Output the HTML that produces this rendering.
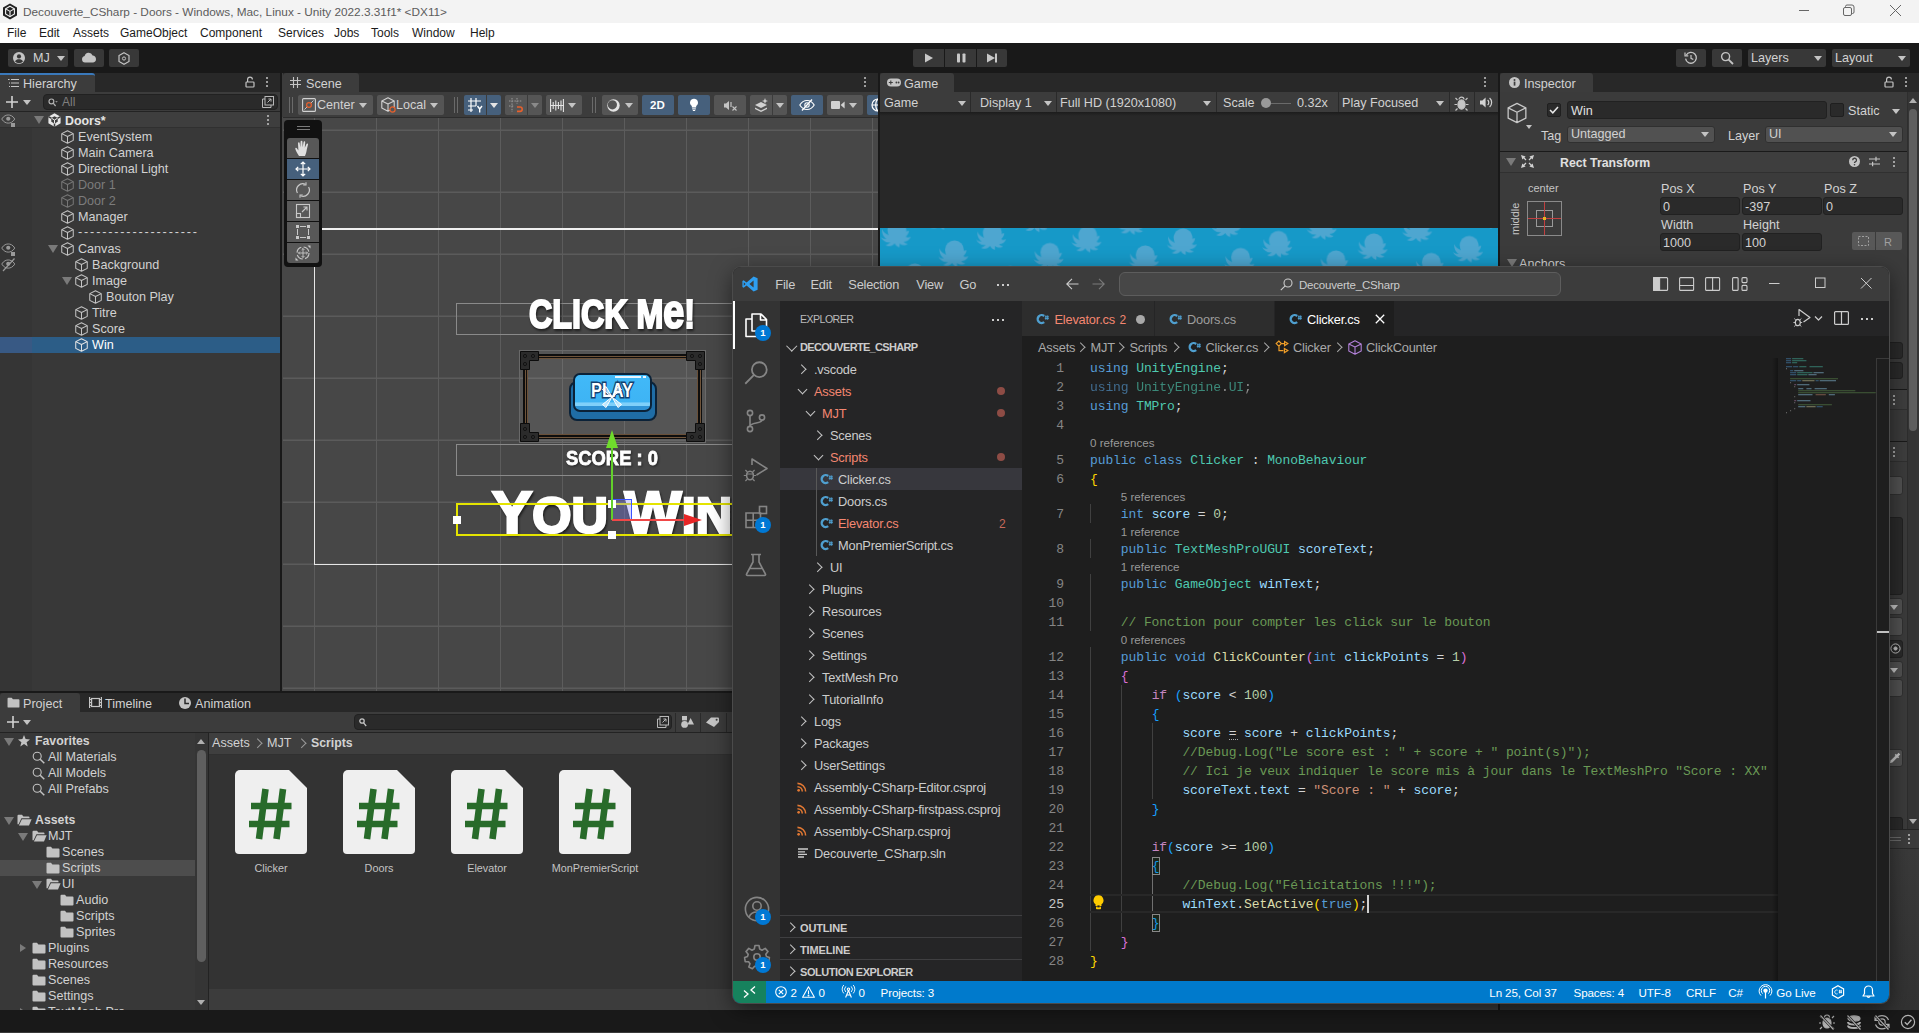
<!DOCTYPE html>
<html lang="en"><head><meta charset="utf-8"><title>Decouverte_CSharp - Unity</title>
<style>
*{box-sizing:border-box;margin:0;padding:0}
html,body{width:1919px;height:1033px;overflow:hidden;background:#191919}
body{position:relative;font-family:"Liberation Sans",sans-serif;font-size:12.6px;color:#d2d2d2;line-height:1}
.a{position:absolute}
.t{position:absolute;white-space:pre;line-height:16px;height:16px}
.u{font-size:12.6px;color:#d2d2d2}
.pan{position:absolute;background:#383838;overflow:hidden}
.tabbar{position:absolute;left:0;top:0;right:0;height:19px;background:#282828}
.tab{position:absolute;top:0;height:19px;background:#3c3c3c;border-radius:3px 3px 0 0}
.btn{position:absolute;background:#383838;border-radius:2px}
.sbtn{position:absolute;top:22px;height:20px;background:#555;border-radius:2px}
.sbtn.on{background:#46607c}
.fld{position:absolute;background:#2a2a2a;border:1px solid #212121;border-radius:3px;height:18px}
.dd{position:absolute;background:#515151;border:1px solid #303030;border-radius:3px;height:18px}
.tri{position:absolute;width:0;height:0;border-left:4.5px solid transparent;border-right:4.5px solid transparent;border-top:5px solid #c4c4c4}
.trir{position:absolute;width:0;height:0;border-top:4.5px solid transparent;border-bottom:4.5px solid transparent;border-left:6px solid #7a7a7a}
.fold{position:absolute;width:0;height:0;border-left:5px solid transparent;border-right:5px solid transparent;border-top:8px solid #7a7a7a}
svg{position:absolute;overflow:visible}
.kebab{position:absolute;width:2px;height:2px;background:#c4c4c4;border-radius:1px;box-shadow:0 4px 0 #c4c4c4,0 8px 0 #c4c4c4}
/* vscode */
.vs{position:absolute;left:733px;top:267px;width:1156px;height:736px;background:#1f1f1f;border-radius:8px;overflow:hidden;box-shadow:0 0 0 1px #4b4b4b,0 6px 22px rgba(0,0,0,.55);font-size:12.7px;color:#ccc}
.vt{position:absolute;white-space:pre;line-height:22px;height:22px;font-size:12.8px;letter-spacing:-.2px;color:#ccc;margin-top:1px}
.code{position:absolute;left:357px;white-space:pre;font-family:"Liberation Mono",monospace;font-size:13px;letter-spacing:-0.1px;line-height:19px;height:19px;color:#d4d4d4;margin-top:1px}
.ln{position:absolute;left:289px;width:42px;text-align:right;font-family:"Liberation Mono",monospace;font-size:13px;letter-spacing:-0.1px;line-height:19px;height:19px;color:#858585;margin-top:1px}
.cl{position:absolute;white-space:pre;font-size:11.6px;line-height:16px;height:16px;color:#999;margin-top:1px}
.k{color:#569cd6}.c{color:#c586c0}.ty{color:#4ec9b0}.v{color:#9cdcfe}.f{color:#dcdcaa}.n{color:#b5cea8}.s{color:#ce9178}.cm{color:#6a9955}
.b1{color:#ffd700}.b2{color:#da70d6}.b3{color:#179fff}
.ig{position:absolute;width:1px;background:#404040}
.chev{position:absolute;width:6.5px;height:6.5px;border-right:1.2px solid #c5c5c5;border-bottom:1.2px solid #c5c5c5}
.chev.r{transform:rotate(-45deg)}.chev.d{transform:rotate(45deg)}
.badge{position:absolute;width:16px;height:16px;border-radius:8px;background:#0078d4;color:#fff;font-size:9.5px;font-weight:bold;line-height:16px;text-align:center}
</style></head><body>
<svg width="0" height="0" style="position:absolute"><defs>
<symbol id="cube" viewBox="0 0 14 15"><path d="M7 .8 L13.2 3.9 V11.1 L7 14.2 L.8 11.1 V3.9 Z M.8 3.9 L7 7 L13.2 3.9 M7 7 V14.2" fill="none" stroke="currentColor" stroke-width="1.1" stroke-linejoin="round"/></symbol>
<symbol id="fclosed" viewBox="0 0 14 12"><path d="M.5 1.8 a1 1 0 0 1 1 -1 H5 L6.4 2.4 H12.5 a1 1 0 0 1 1 1 V10.5 a1 1 0 0 1 -1 1 H1.5 a1 1 0 0 1 -1 -1 Z" fill="#c2c2c2"/></symbol>
<symbol id="fopen" viewBox="0 0 15 12"><path d="M.5 1.8 a1 1 0 0 1 1 -1 H5 L6.4 2.4 H11.5 a1 1 0 0 1 1 1 V4.2 H4.4 L1.6 10.2 H.5 Z" fill="#c2c2c2"/><path d="M4.9 5.2 H14.6 L12 11.5 H1.9 Z" fill="#c2c2c2"/></symbol>
<symbol id="mag" viewBox="0 0 13 13"><circle cx="5.2" cy="5.2" r="4" fill="none" stroke="#c2c2c2" stroke-width="1.1"/><path d="M8.2 8.2 L12.3 12.3" stroke="#c2c2c2" stroke-width="1.5"/></symbol>
<symbol id="cs" viewBox="0 0 13 12"><path d="M8.2 3 A4 4 0 1 0 8.2 9.2" fill="none" stroke="#4f9fcf" stroke-width="2.3"/><path d="M9.9 2.4 V6.8 M11.7 2.4 V6.8 M8.8 3.8 H12.8 M8.8 5.4 H12.8" stroke="#4f9fcf" stroke-width="1"/></symbol>
<symbol id="rss" viewBox="0 0 11 11"><circle cx="1.8" cy="9.2" r="1.5" fill="#e37933"/><path d="M.5 5.2 A5.3 5.3 0 0 1 5.8 10.5 M.5 1.5 A9 9 0 0 1 9.5 10.5" fill="none" stroke="#e37933" stroke-width="1.7"/></symbol>
<symbol id="script" viewBox="0 0 72 84"><path d="M5 0 H54 L72 18 V80 a4 4 0 0 1 -4 4 H4 a4 4 0 0 1 -4 -4 V5 a5 5 0 0 1 5 -5 Z" fill="#efefef"/><path d="M30.5 19 L24 69 M48 19 L41.5 69 M16 36 H56.5 M14 54 H54.5" stroke="#286b2a" stroke-width="6.6" fill="none"/></symbol>
<symbol id="eye" viewBox="0 0 16 12"><path d="M.8 5.5 C3 1.8 6 1 8 1 S13 1.8 15.2 5.5 C13 9 10.3 10 8 10 S3 9 .8 5.5Z" fill="none" stroke="#9a9a9a" stroke-width="1.1"/><circle cx="8" cy="5.2" r="2.3" fill="#9a9a9a"/></symbol>
</defs></svg>
<!-- ===== Unity window chrome ===== -->
<div class="a" style="left:0;top:0;width:1919px;height:23px;background:#f3f3f3"></div>
<svg style="left:2px;top:3px" width="16" height="17" viewBox="0 0 16 17"><path d="M8 0.5 L15 4.5 V12.5 L8 16.5 L1 12.5 V4.5 Z" fill="#222"/><path d="M8 3.2 L12.4 5.8 V10.9 L8 13.6 L3.6 10.9 V5.8 Z" fill="none" stroke="#f3f3f3" stroke-width="1.1"/><path d="M8 8.4 V13.4 M8 8.4 L3.8 5.9 M8 8.4 L12.2 5.9" stroke="#f3f3f3" stroke-width="1.1"/></svg>
<div class="t" style="left:23px;top:4px;font-size:11.8px;color:#5c5c5c;line-height:17px">Decouverte_CSharp - Doors - Windows, Mac, Linux - Unity 2022.3.31f1* &lt;DX11&gt;</div>
<svg style="left:1798px;top:4px" width="106" height="14" viewBox="0 0 106 14" fill="none" stroke="#666" stroke-width="1"><path d="M1 6.5 H11"/><rect x="45.5" y="3.5" width="8" height="8" rx="1.5"/><path d="M47.5 3.5 V2.5 a1.5 1.5 0 0 1 1.5 -1.5 H54 a2 2 0 0 1 2 2 V8 a1.5 1.5 0 0 1 -1.5 1.5 H53.5"/><path d="M92 1 L103 12 M103 1 L92 12"/></svg>
<div class="a" style="left:0;top:23px;width:1919px;height:20px;background:#fff"></div>
<div class="t" style="left:7px;top:25px;font-size:12px;color:#1b1b1b">File</div>
<div class="t" style="left:39px;top:25px;font-size:12px;color:#1b1b1b">Edit</div>
<div class="t" style="left:73px;top:25px;font-size:12px;color:#1b1b1b">Assets</div>
<div class="t" style="left:120px;top:25px;font-size:12px;color:#1b1b1b">GameObject</div>
<div class="t" style="left:200px;top:25px;font-size:12px;color:#1b1b1b">Component</div>
<div class="t" style="left:278px;top:25px;font-size:12px;color:#1b1b1b">Services</div>
<div class="t" style="left:334px;top:25px;font-size:12px;color:#1b1b1b">Jobs</div>
<div class="t" style="left:371px;top:25px;font-size:12px;color:#1b1b1b">Tools</div>
<div class="t" style="left:412px;top:25px;font-size:12px;color:#1b1b1b">Window</div>
<div class="t" style="left:470px;top:25px;font-size:12px;color:#1b1b1b">Help</div>
<!-- main toolbar -->
<div class="a" style="left:0;top:43px;width:1919px;height:30px;background:#191919"></div>
<div class="btn" style="left:8px;top:49px;width:60px;height:18px"></div>
<svg style="left:13px;top:52px" width="12" height="12" viewBox="0 0 12 12"><circle cx="6" cy="6" r="6" fill="#c4c4c4"/><circle cx="6" cy="4.4" r="2.1" fill="#383838"/><path d="M2 9.6 C2.6 7.6 4.4 7.2 6 7.2 S9.4 7.6 10 9.6 A5.6 5.6 0 0 1 2 9.6Z" fill="#383838"/></svg>
<div class="t u" style="left:33px;top:50px">MJ</div>
<div class="tri" style="left:57px;top:56px"></div>
<div class="btn" style="left:74px;top:49px;width:30px;height:18px"></div>
<svg style="left:81px;top:52px" width="16" height="11" viewBox="0 0 16 11"><path d="M4 10.5 a3.3 3.3 0 0 1 -.4 -6.5 a4.2 4.2 0 0 1 8 -.6 a3.6 3.6 0 0 1 .6 7.1 Z" fill="#c4c4c4"/></svg>
<div class="btn" style="left:109px;top:49px;width:30px;height:18px"></div>
<svg style="left:118px;top:52px" width="12" height="13" viewBox="0 0 12 13" fill="none" stroke="#c4c4c4" stroke-width="1.2"><path d="M6 .8 L11 3.6 V9.4 L6 12.2 L1 9.4 V3.6 Z"/><circle cx="6" cy="6.5" r="1.6" stroke-width="1"/></svg>
<div class="btn" style="left:913px;top:49px;width:31px;height:18px;border-radius:2px 0 0 2px"></div>
<div class="btn" style="left:945px;top:49px;width:31px;height:18px;border-radius:0"></div>
<div class="btn" style="left:977px;top:49px;width:30px;height:18px;border-radius:0 2px 2px 0"></div>
<svg style="left:913px;top:49px" width="94" height="18" viewBox="0 0 94 18" fill="#c8c8c8"><path d="M12 4.5 L20 9 L12 13.5Z"/><rect x="44" y="4.5" width="3" height="9" rx=".8"/><rect x="49.5" y="4.5" width="3" height="9" rx=".8"/><path d="M74 4.5 L82 9 L74 13.5Z"/><rect x="82" y="4.5" width="2" height="9"/></svg>
<div class="btn" style="left:1676px;top:49px;width:30px;height:18px"></div>
<svg style="left:1684px;top:51px" width="14" height="14" viewBox="0 0 14 14" fill="none" stroke="#c4c4c4" stroke-width="1.3"><path d="M2.2 4.2 A5.4 5.4 0 1 1 1.6 7.6"/><path d="M1 1.5 V4.8 H4.3" stroke-width="1.2"/><path d="M7 4 V7.3 L9.3 8.6" stroke-width="1.2"/></svg>
<div class="btn" style="left:1712px;top:49px;width:30px;height:18px"></div>
<svg style="left:1720px;top:51px" width="14" height="14" viewBox="0 0 14 14" fill="none" stroke="#c4c4c4" stroke-width="1.4"><circle cx="5.6" cy="5.6" r="4"/><path d="M8.6 8.6 L13 13" stroke-width="1.8"/></svg>
<div class="btn" style="left:1748px;top:49px;width:78px;height:18px"></div>
<div class="t u" style="left:1751px;top:50px">Layers</div><div class="tri" style="left:1814px;top:56px"></div>
<div class="btn" style="left:1832px;top:49px;width:78px;height:18px"></div>
<div class="t u" style="left:1835px;top:50px">Layout</div><div class="tri" style="left:1898px;top:56px"></div>
<!-- status bar -->
<div class="a" style="left:0;top:1010px;width:1919px;height:23px;background:#191919;border-bottom:1px solid #3a3a3a"></div>
<svg style="left:1818px;top:1013px" width="98" height="18" viewBox="0 0 98 18" fill="none" stroke="#b4b4b4" stroke-width="1.2"><g><ellipse cx="9" cy="10" rx="4" ry="5" fill="#b4b4b4"/><path d="M4 5 L2 3 M14 5 L16 3 M3 10 H1 M15 10 H17 M4 14 L2 16 M14 14 L16 16 M6.5 4.5 a2.5 2.5 0 0 1 5 0"/><path d="M2 2 L16 17" stroke="#191919" stroke-width="2.5"/><path d="M2.5 2.5 L15.5 16.5"/></g><g transform="translate(27,0)"><ellipse cx="9" cy="5.5" rx="6" ry="2.6" fill="#b4b4b4"/><path d="M3 9 a6 2.6 0 0 0 12 0 M3 12.5 a6 2.6 0 0 0 12 0" stroke-width="2"/><path d="M2 2 L16 17" stroke="#191919" stroke-width="2.5"/><path d="M2.5 2.5 L15.5 16.5"/></g><g transform="translate(55,0)"><circle cx="9" cy="9" r="3.2"/><path d="M2.5 7 a7 7 0 0 1 13 0 M15.5 11.5 a7 7 0 0 1 -13 0 M2 3.5 V7.3 H5.5 M16 15 V11.3 H12.5"/><path d="M2 2 L16 17" stroke="#191919" stroke-width="2.5"/><path d="M2.5 2.5 L15.5 16.5"/></g><g transform="translate(81,0)"><circle cx="9" cy="9" r="6.6"/><path d="M5.8 9.2 L8.2 11.6 L12.4 6.8" stroke-width="1.4"/></g></svg>
<!-- ===== Hierarchy ===== -->
<div class="pan" style="left:0;top:73px;width:280px;height:618px">
 <div class="tabbar"></div>
 <div class="tab" style="left:0;width:95px;border-top:2px solid #3a79bb;border-radius:0 3px 0 0"></div>
 <svg style="left:8px;top:5px" width="11" height="10" viewBox="0 0 11 10" stroke="#c4c4c4" stroke-width="1.2"><path d="M3 1.5 H11 M3 5 H11 M3 8.5 H11 M0 1.5 H1.6 M1 5 H2 M1 8.5 H2"/></svg>
 <div class="t u" style="left:23px;top:3px">Hierarchy</div>
 <svg style="left:245px;top:3px" width="10" height="12" viewBox="0 0 10 12" fill="none" stroke="#c4c4c4" stroke-width="1.2"><rect x="1" y="6" width="8" height="5" rx=".8"/><path d="M2.6 6 V3.6 a2.4 2.4 0 0 1 4.8 0"/></svg>
 <div class="kebab" style="left:266px;top:4px"></div>
 <div class="a" style="left:0;top:19px;width:280px;height:20px;background:#3c3c3c;border-bottom:1px solid #232323"></div>
 <svg style="left:6px;top:23px" width="12" height="12" viewBox="0 0 12 12" stroke="#d2d2d2" stroke-width="1.6"><path d="M6 0 V12 M0 6 H12"/></svg>
 <div class="tri" style="left:23px;top:27px;border-left-width:4px;border-right-width:4px"></div>
 <div class="fld" style="left:43px;top:21px;width:235px;height:16px;border-radius:4px"></div>
 <svg style="left:48px;top:25px" width="10" height="9" viewBox="0 0 10 9" fill="none" stroke="#b0b0b0" stroke-width="1.2"><circle cx="3.4" cy="3.4" r="2.4"/><path d="M5.2 5.2 L7.6 8"/><path d="M7.2 3.2 H9.8 L8.5 4.6Z" fill="#b0b0b0" stroke="none"/></svg>
 <div class="t" style="left:62px;top:21px;font-size:12px;color:#7f7f7f">All</div>
 <svg style="left:262px;top:23px" width="12" height="12" viewBox="0 0 12 12" fill="none" stroke="#b8b8b8" stroke-width="1"><path d="M3 3 H.5 V11.5 H9 V9"/><rect x="3" y=".5" width="8.5" height="8.5"/><path d="M5.5 6.5 L9 3 M6.4 3 H9 V5.6"/></svg>
 <!-- vis column -->
 <div class="a" style="left:0;top:39px;width:32px;height:579px;background:#353535"></div>
 <!-- scene row -->
 <div class="a" style="left:0;top:39px;width:280px;height:16px;background:#3e3e3e;border-bottom:1px solid #303030"></div>
 <svg style="left:1px;top:41px;color:#9a9a9a" width="14.5" height="11"><use href="#eye"/></svg><div class="a" style="left:11px;top:50px;width:4px;height:4px;background:#9a9a9a"></div>
 <div class="fold" style="left:34px;top:43px"></div>
 <svg style="left:48px;top:40px" width="13" height="14" viewBox="0 0 13 14"><path d="M6.5 .3 L12.6 3.8 V10.2 L6.5 13.7 L.4 10.2 V3.8 Z" fill="#e8e8e8"/><path d="M6.5 7 V13.7 M6.5 7 L.4 3.6 M6.5 7 L12.6 3.6" stroke="#3e3e3e" stroke-width="1.5"/><path d="M6.5 3.3 L9.7 5.1 V8.8 L6.5 10.6 L3.3 8.8 V5.1 Z" fill="#3e3e3e"/><path d="M6.5 7 V10.6 M6.5 7 L3.3 5.1 M6.5 7 L9.7 5.1" stroke="#e8e8e8" stroke-width="1"/></svg>
 <div class="t" style="left:65px;top:40px;font-weight:bold;font-size:12.4px;color:#e4e4e4">Doors*</div>
 <div class="kebab" style="left:267px;top:42px"></div>
 <!-- selected row -->
 <div class="a" style="left:0;top:264px;width:280px;height:16px;background:#2c5d87"></div>
 <div class="a" style="left:0;top:264px;width:32px;height:16px;background:#385984"></div>
 <!-- rows -->
 <svg style="left:61px;top:57px;color:#c4c4c4" width="13" height="14"><use href="#cube"/></svg><div class="t u" style="left:78px;top:56px">EventSystem</div>
 <svg style="left:61px;top:73px;color:#c4c4c4" width="13" height="14"><use href="#cube"/></svg><div class="t u" style="left:78px;top:72px">Main Camera</div>
 <svg style="left:61px;top:89px;color:#c4c4c4" width="13" height="14"><use href="#cube"/></svg><div class="t u" style="left:78px;top:88px">Directional Light</div>
 <svg style="left:61px;top:105px;color:#777" width="13" height="14"><use href="#cube"/></svg><div class="t u" style="left:78px;top:104px;color:#7c7c7c">Door 1</div>
 <svg style="left:61px;top:121px;color:#777" width="13" height="14"><use href="#cube"/></svg><div class="t u" style="left:78px;top:120px;color:#7c7c7c">Door 2</div>
 <svg style="left:61px;top:137px;color:#c4c4c4" width="13" height="14"><use href="#cube"/></svg><div class="t u" style="left:78px;top:136px">Manager</div>
 <svg style="left:61px;top:153px;color:#c4c4c4" width="13" height="14"><use href="#cube"/></svg><div class="t u" style="left:78px;top:151px;letter-spacing:1.85px">--------------------</div>
 <svg style="left:1px;top:170px" width="14.5" height="11"><use href="#eye"/></svg><div class="a" style="left:11px;top:179px;width:4px;height:4px;background:#9a9a9a"></div>
 <div class="fold" style="left:48px;top:172px"></div>
 <svg style="left:61px;top:169px;color:#c4c4c4" width="13" height="14"><use href="#cube"/></svg><div class="t u" style="left:78px;top:168px">Canvas</div>
 <svg style="left:1px;top:186px" width="14.5" height="11"><use href="#eye"/></svg><svg style="left:1px;top:184px" width="16" height="16" viewBox="0 0 16 16"><path d="M2 14 L13.5 1.5" stroke="#9a9a9a" stroke-width="1.2"/></svg>
 <svg style="left:75px;top:185px;color:#c4c4c4" width="13" height="14"><use href="#cube"/></svg><div class="t u" style="left:92px;top:184px">Background</div>
 <div class="fold" style="left:62px;top:204px"></div>
 <svg style="left:75px;top:201px;color:#c4c4c4" width="13" height="14"><use href="#cube"/></svg><div class="t u" style="left:92px;top:200px">Image</div>
 <svg style="left:89px;top:217px;color:#c4c4c4" width="13" height="14"><use href="#cube"/></svg><div class="t u" style="left:106px;top:216px">Bouton Play</div>
 <svg style="left:75px;top:233px;color:#c4c4c4" width="13" height="14"><use href="#cube"/></svg><div class="t u" style="left:92px;top:232px">Titre</div>
 <svg style="left:75px;top:249px;color:#c4c4c4" width="13" height="14"><use href="#cube"/></svg><div class="t u" style="left:92px;top:248px">Score</div>
 <svg style="left:75px;top:265px;color:#e4e4e4" width="13" height="14"><use href="#cube"/></svg><div class="t u" style="left:92px;top:264px;color:#fff">Win</div>
</div>
<!-- ===== Scene ===== -->
<div class="a" style="left:282px;top:73px;width:2px;height:618px;background:linear-gradient(#3c3c3c 0,#3c3c3c 44px,#474747 44px)"></div>
<div class="pan" style="left:283px;top:73px;width:595px;height:618px;background:#474747">
 <div class="tabbar"></div>
 <div class="tab" style="left:0;width:76px"></div>
 <svg style="left:7px;top:4px" width="11" height="11" viewBox="0 0 11 11" stroke="#c4c4c4" stroke-width="1.1"><path d="M3.5 0 V11 M7.5 0 V11 M0 3.5 H11 M0 7.5 H11"/></svg>
 <div class="t u" style="left:23px;top:3px">Scene</div>
 <div class="kebab" style="left:581px;top:4px"></div>
 <div class="a" style="left:0;top:19px;width:595px;height:26px;background:#3c3c3c;border-bottom:1px solid #2c2c2c"></div>
 <!-- grid -->
 <div class="a" style="left:0;top:45px;width:595px;height:573px;background:
  repeating-linear-gradient(90deg,transparent 0,transparent 61px,#5c5c5c 61px,#5c5c5c 62px) 32px 0/62px 100%,
  linear-gradient(180deg,#515151 0,#515151 1px,#5b5b5b 1px,#5b5b5b 2px,transparent 2px) 0 0/100% 62px;background-position:32px 0,0 11px"></div>
 <!-- canvas outline -->
 <div class="a" style="left:38px;top:155px;width:557px;height:2px;background:#f0f0f0"></div>
 <div class="a" style="left:31px;top:156px;width:1px;height:336px;background:#e6e6e6"></div>
 <div class="a" style="left:31px;top:491px;width:564px;height:1px;background:#e6e6e6"></div>
 <!-- rect outlines -->
 <div class="a" style="left:173px;top:230px;width:440px;height:32px;border:1px solid #8a8a8a"></div>
 <div class="a" style="left:173px;top:371px;width:440px;height:32px;border:1px solid #8a8a8a"></div>
 <!-- frame -->
 <div class="a" style="left:236px;top:277px;width:187px;height:93px;background:rgba(255,255,255,.08);border:1px solid #696969"></div>
 <div class="a" style="left:240px;top:281px;width:179px;height:85px;border:4px solid #0e0e0e;box-shadow:inset 0 0 0 1px #6a5038"></div>
 <div class="a" style="left:241.5px;top:282.5px;width:176px;height:82px;border:1px solid #6f543a"></div>
 <svg style="left:237px;top:278px" width="185" height="91" viewBox="0 0 185 91"><g fill="#2b2b2b" stroke="#0c0c0c" stroke-width="1"><path d="M.5 .5 H18.5 V9.5 H9.5 V18.5 H.5Z"/><path d="M184.5 .5 H166.5 V9.5 H175.5 V18.5 H184.5Z"/><path d="M.5 90.5 H18.5 V81.5 H9.5 V72.5 H.5Z"/><path d="M184.5 90.5 H166.5 V81.5 H175.5 V72.5 H184.5Z"/></g><g fill="none" stroke="#0c0c0c" stroke-width=".8"><circle cx="5" cy="5" r="1.6"/><circle cx="13" cy="5" r="1.6"/><circle cx="5" cy="13" r="1.6"/><circle cx="180" cy="5" r="1.6"/><circle cx="172" cy="5" r="1.6"/><circle cx="180" cy="13" r="1.6"/><circle cx="5" cy="86" r="1.6"/><circle cx="13" cy="86" r="1.6"/><circle cx="5" cy="78" r="1.6"/><circle cx="180" cy="86" r="1.6"/><circle cx="172" cy="86" r="1.6"/><circle cx="180" cy="78" r="1.6"/></g></svg>
 <!-- play button -->
 <div class="a" style="left:286px;top:308px;width:88px;height:40px;background:#1f6da6;border:2px solid #0b2238;border-radius:8px"></div>
 <div class="a" style="left:290px;top:300px;width:79px;height:39px;background:linear-gradient(#41b9f8 0,#3eb4f4 78%,#7fd0fa 79%,#7fd0fa 88%,#2f93d6 89%);border:2px solid #0b2238;border-radius:7px"></div>
 <div class="a" style="left:332px;top:303px;width:26px;height:2px;background:#e8f6ff"></div><div class="a" style="left:360px;top:303px;width:3px;height:2px;background:#e8f6ff"></div>
 <svg style="left:300px;top:304px" width="60" height="26"><text x="29" y="20" text-anchor="middle" font-family="Liberation Sans,sans-serif" font-weight="bold" font-size="20" fill="#fff" stroke="#14416e" stroke-width="3" paint-order="stroke" textLength="42" lengthAdjust="spacingAndGlyphs">PLAY</text></svg>
 <svg style="left:317px;top:312px" width="24" height="24" viewBox="0 0 24 24" fill="rgba(255,255,255,.5)" stroke="#fff" stroke-width="1"><path d="M12 12 L2.5 4.5 L6 1.5Z M12 12 L21.5 4.5 L18 1.5Z M12 12 L2.5 19.5 L6 22.5Z M12 12 L21.5 19.5 L18 22.5Z"/></svg>
 <!-- texts -->
 <svg style="left:240px;top:220px" width="180" height="44"><text x="6" y="35" font-family="Liberation Sans,sans-serif" font-weight="bold" font-size="41" fill="#fff" stroke="#fff" stroke-width="2.2" textLength="166" lengthAdjust="spacingAndGlyphs" style="filter:drop-shadow(1px 2px 1px rgba(0,0,0,.55))">CLICK M<tspan font-size="48">e</tspan>!</text></svg>
 <svg style="left:280px;top:372px" width="100" height="24"><text x="3" y="19.5" font-family="Liberation Sans,sans-serif" font-weight="bold" font-size="21" fill="#fff" stroke="#fff" stroke-width=".8" textLength="92" lengthAdjust="spacingAndGlyphs" style="filter:drop-shadow(1px 1px 1px rgba(0,0,0,.5))">SCORE : 0</text></svg>
 <svg style="left:200px;top:405px" width="395" height="64"><text x="9" y="55" font-family="Liberation Sans,sans-serif" font-weight="bold" font-size="60" fill="#fff" stroke="#fff" stroke-width="2.6" textLength="240" lengthAdjust="spacingAndGlyphs" style="filter:drop-shadow(1px 2px 1px rgba(0,0,0,.6))">Y<tspan font-size="50">OU</tspan> W<tspan font-size="50">IN</tspan></text></svg>
 <!-- selection -->
 <div class="a" style="left:173px;top:430px;width:440px;height:33px;border:2px solid #e4e400"></div>
 <div class="a" style="left:329px;top:426px;width:20px;height:21px;background:rgba(130,130,255,.33);border:1px solid #3a55ff"></div>
 <div class="a" style="left:170px;top:443px;width:8px;height:8px;background:#fff"></div>
 <div class="a" style="left:325px;top:427px;width:8px;height:8px;background:#fff"></div>
 <div class="a" style="left:325px;top:458px;width:8px;height:8px;background:#fff"></div>
 <div class="a" style="left:328px;top:372px;width:2px;height:75px;background:#62d02a"></div>
 <svg style="left:322px;top:357px" width="14" height="18" viewBox="0 0 14 18"><path d="M7 0 L13 18 H1Z" fill="#6fdc2c"/></svg>
 <div class="a" style="left:329px;top:446px;width:74px;height:1.5px;background:#f04848"></div>
 <svg style="left:401px;top:441px" width="18" height="12" viewBox="0 0 18 12"><path d="M18 6 L0 0 V12Z" fill="#e82626"/></svg>
 <!-- toolbar buttons -->
 <div class="a" style="left:6px;top:24px;width:1px;height:16px;background:#6a6a6a"></div><div class="a" style="left:9px;top:24px;width:1px;height:16px;background:#6a6a6a"></div>
 <div class="sbtn" style="left:15px;width:75px"></div>
 <svg style="left:19px;top:25px" width="14" height="14" viewBox="0 0 14 14" fill="none"><rect x=".6" y=".6" width="12.8" height="12.8" rx="1" stroke="#d2d2d2" stroke-width="1.1"/><path d="M2.5 11.5 L11.5 2.5" stroke="#d2d2d2" stroke-width=".9"/><circle cx="7" cy="7" r="2.4" fill="#555" stroke="#e8602c" stroke-width="1.2"/></svg>
 <div class="t u" style="left:34px;top:24px">Center</div><div class="tri" style="left:76px;top:30px"></div>
 <div class="sbtn" style="left:94px;width:67px"></div>
 <svg style="left:98px;top:24px;color:#d2d2d2" width="14" height="15"><use href="#cube"/></svg><svg style="left:106px;top:33px" width="7" height="7"><circle cx="3.5" cy="3.5" r="2.6" fill="#555" stroke="#e8602c" stroke-width="1.2"/></svg>
 <div class="t u" style="left:113px;top:24px">Local</div><div class="tri" style="left:147px;top:30px"></div>
 <div class="a" style="left:171px;top:24px;width:1px;height:16px;background:#6a6a6a"></div><div class="a" style="left:174px;top:24px;width:1px;height:16px;background:#6a6a6a"></div>
 <div class="sbtn on" style="left:181px;width:22px;border-radius:2px 0 0 2px"></div><div class="sbtn on" style="left:204px;width:14px;border-radius:0 2px 2px 0"></div>
 <svg style="left:185px;top:25px" width="15" height="15" viewBox="0 0 15 15" stroke="#fff" stroke-width="1.2" fill="none"><path d="M3 0 V14 M8 0 V8 M0 3 H13 M0 8 H8 M0 12 H5"/><path d="M9.5 8 L11.7 11 L14 8 M11.7 11 V14.5" stroke-width="1.4"/></svg>
 <div class="tri" style="left:206.5px;top:30px;border-top-color:#e4e4e4"></div>
 <div class="sbtn" style="left:222px;width:22px;border-radius:2px 0 0 2px"></div><div class="sbtn" style="left:245px;width:14px;border-radius:0 2px 2px 0"></div>
 <svg style="left:226px;top:25px" width="15" height="15" viewBox="0 0 15 15" stroke="#9a9a9a" stroke-width="1" fill="none" stroke-dasharray="1.5 1.2"><path d="M3 0 V14 M8 0 V6 M0 3 H13 M0 8 H5"/><path d="M8 9 H11 a2.2 2.2 0 0 1 0 4.4 H8" stroke="#e8602c" stroke-width="1.6" stroke-dasharray="none"/></svg>
 <div class="tri" style="left:247.5px;top:30px;border-top-color:#8a8a8a"></div>
 <div class="sbtn" style="left:263px;width:36px"></div>
 <svg style="left:267px;top:26px" width="14" height="13" viewBox="0 0 14 13" stroke="#e4e4e4" stroke-width="1.1"><path d="M.6 0 V13 M3.2 3 V10 M5.8 1.5 V11.5 M8.4 3 V10 M11 1.5 V11.5 M13.4 0 V13 M0 6.5 H14"/></svg>
 <div class="tri" style="left:285px;top:30px"></div>
 <div class="a" style="left:309px;top:24px;width:1px;height:16px;background:#6a6a6a"></div><div class="a" style="left:312px;top:24px;width:1px;height:16px;background:#6a6a6a"></div>
 <div class="sbtn" style="left:319px;width:36px"></div>
 <svg style="left:323px;top:25px" width="15" height="15" viewBox="0 0 15 15"><circle cx="7.5" cy="7.5" r="6.2" fill="#e4e4e4"/><circle cx="6.4" cy="6.8" r="4.6" fill="#555"/></svg>
 <div class="tri" style="left:342px;top:30px"></div>
 <div class="sbtn on" style="left:359px;width:32px"></div><div class="t" style="left:367px;top:24px;font-weight:bold;font-size:11.5px;color:#fff">2D</div>
 <div class="sbtn on" style="left:395px;width:32px"></div>
 <svg style="left:406px;top:25px" width="10" height="14" viewBox="0 0 12 16" fill="#fff"><path d="M6 .5 a4.8 4.8 0 0 1 2.6 8.8 V11 H3.4 V9.3 A4.8 4.8 0 0 1 6 .5Z"/><rect x="3.8" y="12" width="4.4" height="1.3"/><rect x="4.6" y="14" width="2.8" height="1.2"/></svg>
 <div class="sbtn" style="left:431px;width:32px"></div>
 <svg style="left:440px;top:26px" width="15" height="13" viewBox="0 0 15 13" fill="#c4c4c4" stroke="#c4c4c4"><path d="M1 4.5 H3 L6 2 V11 L3 8.5 H1Z" stroke="none"/><path d="M8 3 V8" stroke-width="1.2"/><path d="M9.5 7.5 L13.5 11.5 M13.5 7.5 L9.5 11.5" stroke-width="1.1"/></svg>
 <div class="sbtn" style="left:467px;width:22px;border-radius:2px 0 0 2px"></div><div class="sbtn" style="left:490px;width:14px;border-radius:0 2px 2px 0"></div>
 <svg style="left:471px;top:25px" width="15" height="14" viewBox="0 0 15 14" fill="#d2d2d2"><path d="M7 4 L13 7 L7 10 L1 7Z"/><path d="M1 9.5 L7 12.5 L13 9.5 L13 11 L7 14 L1 11Z"/><path d="M11 0 L11.8 2.2 L14 3 L11.8 3.8 L11 6 L10.2 3.8 L8 3 L10.2 2.2Z"/></svg>
 <div class="tri" style="left:492.5px;top:30px"></div>
 <div class="sbtn on" style="left:508px;width:32px"></div>
 <svg style="left:516px;top:26px" width="16" height="12" viewBox="0 0 16 12"><path d="M.8 6 C3 2.3 6 1.5 8 1.5 S13 2.3 15.2 6 C13 9.7 10.3 10.5 8 10.5 S3 9.7 .8 6Z" fill="none" stroke="#fff" stroke-width="1.1"/><circle cx="8" cy="6" r="2.2" fill="none" stroke="#fff" stroke-width="1.1"/><path d="M3 11.5 L13 .5" stroke="#fff" stroke-width="1.3"/></svg>
 <div class="sbtn" style="left:544px;width:36px"></div>
 <svg style="left:548px;top:27px" width="14" height="10" viewBox="0 0 14 10" fill="#d2d2d2"><rect x="0" y="1" width="9" height="8" rx="1"/><path d="M9.6 5 L13.6 1.6 V8.4Z"/></svg>
 <div class="tri" style="left:566px;top:30px"></div>
 <div class="sbtn on" style="left:584px;width:32px"></div>
 <svg style="left:587px;top:25px" width="14" height="14" viewBox="0 0 14 14" fill="none" stroke="#fff" stroke-width="1.2"><circle cx="8" cy="7" r="6"/><path d="M2 7 H9 M8 1 C5 3 5 11 8 13"/></svg>
 <!-- tool overlay -->
 <div class="a" style="left:1px;top:47px;width:38px;height:147px;background:#111;border-radius:4px"></div>
 <div class="a" style="left:14px;top:53px;width:13px;height:1px;background:#7a7a7a"></div><div class="a" style="left:14px;top:56px;width:13px;height:1px;background:#7a7a7a"></div>
 <div class="a" style="left:4px;top:65px;width:32px;height:20px;background:#585858;border-radius:3px 3px 0 0"></div>
 <div class="a" style="left:4px;top:86px;width:32px;height:20px;background:#46607c"></div>
 <div class="a" style="left:4px;top:107px;width:32px;height:20px;background:#585858"></div>
 <div class="a" style="left:4px;top:128px;width:32px;height:20px;background:#585858"></div>
 <div class="a" style="left:4px;top:149px;width:32px;height:20px;background:#585858"></div>
 <div class="a" style="left:4px;top:170px;width:32px;height:20px;background:#585858;border-radius:0 0 3px 3px"></div>
 <svg style="left:12px;top:67px" width="16" height="16" viewBox="0 0 16 16" fill="#e0e0e0"><path d="M4 16 C2 13 .5 10.5 .3 8.6 C.2 7.6 1.4 7.4 2 8.4 L3.4 10.6 L3 3.2 C3 2 4.6 2 4.7 3.2 L5.3 7.5 L5.6 1.6 C5.7 .4 7.3 .4 7.4 1.6 L7.6 7.3 L8.6 1.9 C8.8 .8 10.3 1 10.2 2.2 L9.8 7.7 L11.5 4 C12 3 13.3 3.5 13 4.6 L11.8 9.5 C11.5 12 10.8 14 10 16Z"/></svg>
 <svg style="left:12px;top:88px" width="16" height="16" viewBox="0 0 16 16" fill="none" stroke="#fff" stroke-width="1.2"><path d="M8 1 V15 M1 8 H15 M5.8 3.2 L8 1 L10.2 3.2 M5.8 12.8 L8 15 L10.2 12.8 M3.2 5.8 L1 8 L3.2 10.2 M12.8 5.8 L15 8 L12.8 10.2"/></svg>
 <svg style="left:12px;top:109px" width="16" height="16" viewBox="0 0 16 16" fill="none" stroke="#c8c8c8" stroke-width="1.2"><path d="M2.4 11 A6.3 6.3 0 0 1 10.4 2.2 M13.6 5 A6.3 6.3 0 0 1 5.6 13.8"/><path d="M11 .2 V3 H8.2 M5 15.8 V13 H7.8" stroke-width="1.1"/></svg>
 <svg style="left:12px;top:130px" width="16" height="16" viewBox="0 0 16 16" fill="none" stroke="#c8c8c8" stroke-width="1.1"><rect x="1.5" y="1.5" width="13" height="13"/><rect x="1.5" y="10.5" width="4" height="4"/><path d="M7 9 L12 4 M8.4 4 H12 V7.6"/></svg>
 <svg style="left:12px;top:151px" width="16" height="16" viewBox="0 0 16 16" fill="#c8c8c8"><path d="M5 2 H11 V3 H5Z M5 13 H11 V14 H5Z M2 5 H3 V11 H2Z M13 5 H14 V11 H13Z"/><rect x="1" y="1" width="3" height="3"/><rect x="12" y="1" width="3" height="3"/><rect x="1" y="12" width="3" height="3"/><rect x="12" y="12" width="3" height="3"/></svg>
 <svg style="left:12px;top:172px" width="16" height="16" viewBox="0 0 16 16" fill="none" stroke="#c8c8c8" stroke-width="1.1"><circle cx="8" cy="8" r="6" stroke-dasharray="7 2.4"/><path d="M8 3.5 V12.5 M3.5 8 H12.5 M6.6 4.9 L8 3.5 L9.4 4.9 M6.6 11.1 L8 12.5 L9.4 11.1 M4.9 6.6 L3.5 8 L4.9 9.4 M11.1 6.6 L12.5 8 L11.1 9.4" stroke-width=".9"/><path d="M.5 15.5 L.5 12.5 L3.5 15.5Z M15.5 .5 L15.5 3.5 L12.5 .5Z" fill="#c8c8c8" stroke="none"/></svg>
</div>
<!-- ===== Game ===== -->
<div class="pan" style="left:880px;top:73px;width:618px;height:618px;background:#282828">
 <div class="tabbar"></div>
 <div class="tab" style="left:0;width:74px"></div>
 <svg style="left:7px;top:5px" width="14" height="9" viewBox="0 0 14 9"><rect x="0" y=".5" width="14" height="8" rx="4" fill="#c4c4c4"/><path d="M3.8 2.5 V6.5 M1.8 4.5 H5.8" stroke="#3c3c3c" stroke-width="1.1"/><circle cx="9.4" cy="4.5" r=".9" fill="#3c3c3c"/><circle cx="11.6" cy="4.5" r=".9" fill="#3c3c3c"/></svg>
 <div class="t u" style="left:24px;top:3px">Game</div>
 <div class="kebab" style="left:604px;top:4px"></div>
 <div class="a" style="left:0;top:19px;width:618px;height:20px;background:#3c3c3c"></div><div class="a" style="left:0;top:39px;width:618px;height:4px;background:linear-gradient(#1c1c1c,#282828)"></div>
 <div class="t u" style="left:4px;top:22px">Game</div><div class="tri" style="left:78px;top:28px"></div>
 <div class="a" style="left:90px;top:19px;width:1px;height:20px;background:#2a2a2a"></div>
 <div class="t u" style="left:100px;top:22px">Display 1</div><div class="tri" style="left:164px;top:28px"></div>
 <div class="a" style="left:176px;top:19px;width:1px;height:20px;background:#2a2a2a"></div>
 <div class="t u" style="left:180px;top:22px">Full HD (1920x1080)</div><div class="tri" style="left:323px;top:28px"></div>
 <div class="a" style="left:336px;top:19px;width:1px;height:20px;background:#2a2a2a"></div>
 <div class="t u" style="left:343px;top:22px">Scale</div>
 <div class="a" style="left:386px;top:30px;width:25px;height:1px;background:#6a6a6a"></div><div class="a" style="left:381px;top:25px;width:10px;height:10px;border-radius:5px;background:#999"></div>
 <div class="t u" style="left:417px;top:22px">0.32x</div>
 <div class="a" style="left:458px;top:19px;width:1px;height:20px;background:#2a2a2a"></div>
 <div class="t u" style="left:462px;top:22px">Play Focused</div><div class="tri" style="left:556px;top:28px"></div>
 <div class="a" style="left:569px;top:19px;width:1px;height:20px;background:#2a2a2a"></div>
 <svg style="left:574px;top:22px" width="15" height="16" viewBox="0 0 15 16" fill="none" stroke="#c4c4c4" stroke-width="1.2"><ellipse cx="7.5" cy="9.5" rx="3.6" ry="4.6" fill="#c4c4c4"/><path d="M3.5 5 L1.5 3 M11.5 5 L13.5 3 M3 9.5 H.5 M12 9.5 H14.5 M3.5 13.5 L1.5 15.5 M11.5 13.5 L13.5 15.5 M5 4.6 a2.5 2.5 0 0 1 5 0"/></svg>
 <div class="a" style="left:594px;top:19px;width:1px;height:20px;background:#2a2a2a"></div>
 <svg style="left:600px;top:23px" width="14" height="13" viewBox="0 0 14 13" fill="#d2d2d2" stroke="#d2d2d2"><path d="M0 4.5 H2.4 L5.6 1.6 V11.4 L2.4 8.5 H0Z" stroke="none"/><path d="M7.6 4 a3.2 3.2 0 0 1 0 5 M9.6 2 a6 6 0 0 1 0 9" fill="none" stroke-width="1.2"/></svg>
 <!-- game image -->
 <svg style="left:0;top:155px" width="618" height="462" viewBox="0 0 618 462"><defs><g id="oct"><circle cx="0" cy="-3" r="9.4"/><path d="M-8 2 C-11 1 -14 -1 -15 -4 C-15 1 -13 4 -10 6 C-13 6 -15 5 -16 4 C-14 8 -10 10 -6 9 C-8 11 -10 12 -11 12 C-8 14 -4 13 -2 10 C-1 12 1 13 3 14 C3 12 3 11 3 10 C6 12 9 12 11 10 C9 10 8 9 7 8 C10 8 13 6 14 3 C12 4 10 4 9 3 C11 1 12 -1 12 -3 Z"/></g><pattern id="op" width="95.4" height="76" patternUnits="userSpaceOnUse" patternTransform="rotate(1.5)"><g fill="#4ea6d0"><use href="#oct" x="17" y="5"/><use href="#oct" x="75" y="23"/><use href="#oct" x="17" y="81"/><use href="#oct" x="36" y="47"/><use href="#oct" x="61" y="62"/><use href="#oct" x="61" y="-14"/></g></pattern><linearGradient id="og" x1="0" y1="0" x2="0" y2="1"><stop offset="0" stop-color="#1699c8"/><stop offset=".07" stop-color="#1598c7"/><stop offset=".085" stop-color="#0f83b3"/><stop offset="1" stop-color="#0f83b3"/></linearGradient></defs><rect width="618" height="462" fill="#1699c8"/><rect width="618" height="462" fill="url(#op)"/></svg>
</div>
<!-- ===== Inspector ===== -->
<div class="pan" style="left:1500px;top:73px;width:419px;height:937px">
 <div class="tabbar"></div>
 <div class="tab" style="left:0;width:93px"></div>
 <svg style="left:9px;top:4px" width="11" height="11" viewBox="0 0 11 11"><circle cx="5.5" cy="5.5" r="5.5" fill="#c4c4c4"/><rect x="4.7" y="4.6" width="1.7" height="4" fill="#3c3c3c"/><circle cx="5.5" cy="2.9" r="1" fill="#3c3c3c"/></svg>
 <div class="t u" style="left:24px;top:3px">Inspector</div>
 <svg style="left:384px;top:3px" width="10" height="12" viewBox="0 0 10 12" fill="none" stroke="#c4c4c4" stroke-width="1.2"><rect x="1" y="6" width="8" height="5" rx=".8"/><path d="M2.6 6 V3.6 a2.4 2.4 0 0 1 4.8 0"/></svg>
 <div class="kebab" style="left:405px;top:4px"></div>
 <div class="a" style="left:0;top:19px;width:407px;height:918px;background:#3b3b3b"></div>
 <!-- scrollbar -->
 <div class="a" style="left:407px;top:19px;width:12px;height:740px;background:#353535;border-left:1px solid #2e2e2e"></div>
 <div class="tri" style="left:409px;top:25px;border-top:none;border-bottom:5px solid #b0b0b0"></div>
 <div class="a" style="left:409px;top:36px;width:8px;height:322px;background:#5f5f5f;border-radius:4px"></div>
 <div class="tri" style="left:409px;top:746px;border-top-color:#b0b0b0"></div>
 <!-- header rows -->
 <svg style="left:7px;top:29px;color:#c8c8c8" width="20" height="22" viewBox="0 0 14 15"><path d="M7 .8 L13.2 3.9 V11.1 L7 14.2 L.8 11.1 V3.9 Z M.8 3.9 L7 7 L13.2 3.9 M7 7 V14.2" fill="none" stroke="currentColor" stroke-width=".9" stroke-linejoin="round"/></svg>
 <div class="tri" style="left:26px;top:52px;border-left-width:3.5px;border-right-width:3.5px;border-top-width:4px"></div>
 <div class="a" style="left:47px;top:30px;width:14px;height:14px;background:#2a2a2a;border:1px solid #1f1f1f;border-radius:2px"></div>
 <svg style="left:49px;top:33px" width="10" height="8" viewBox="0 0 10 8" fill="none" stroke="#e8e8e8" stroke-width="1.5"><path d="M1 4 L3.8 6.8 L9 1"/></svg>
 <div class="fld" style="left:67px;top:28px;width:260px"></div><div class="t u" style="left:71px;top:30px;color:#e0e0e0">Win</div>
 <div class="a" style="left:330px;top:30px;width:14px;height:14px;background:#2a2a2a;border:1px solid #1f1f1f;border-radius:2px"></div>
 <div class="t u" style="left:348px;top:30px">Static</div><div class="tri" style="left:392px;top:36px"></div>
 <div class="t u" style="left:41px;top:55px">Tag</div>
 <div class="dd" style="left:67px;top:53px;width:148px;height:17px"></div><div class="t u" style="left:71px;top:53px">Untagged</div><div class="tri" style="left:201px;top:59px"></div>
 <div class="t u" style="left:228px;top:55px">Layer</div>
 <div class="dd" style="left:265px;top:53px;width:138px;height:17px"></div><div class="t u" style="left:269px;top:53px">UI</div><div class="tri" style="left:389px;top:59px"></div>
 <!-- rect transform -->
 <div class="a" style="left:0;top:78px;width:407px;height:22px;background:#3e3e3e;border-top:1px solid #1a1a1a;border-bottom:1px solid #303030"></div>
 <div class="fold" style="left:6px;top:85px"></div>
 <svg style="left:21px;top:82px" width="13" height="13" viewBox="0 0 13 13" fill="#d2d2d2"><path d="M0 0 L4.6 1.4 L1.4 4.6Z M13 0 L8.4 1.4 L11.6 4.6Z M0 13 L4.6 11.6 L1.4 8.4Z M13 13 L8.4 11.6 L11.6 8.4Z"/><path d="M2.4 2.4 L5 5 M10.6 2.4 L8 5 M2.4 10.6 L5 8 M10.6 10.6 L8 8" stroke="#d2d2d2" stroke-width="1.3"/></svg>
 <div class="t" style="left:60px;top:82px;font-weight:bold;font-size:12.3px;color:#e0e0e0">Rect Transform</div>
 <svg style="left:349px;top:83px" width="11" height="11" viewBox="0 0 11 11"><circle cx="5.5" cy="5.5" r="5.5" fill="#c4c4c4"/><path d="M3.7 4.2 a1.9 1.9 0 1 1 2.6 1.7 c-.6.3 -.8.6 -.8 1.2" fill="none" stroke="#3e3e3e" stroke-width="1.3"/><circle cx="5.5" cy="8.7" r=".8" fill="#3e3e3e"/></svg>
 <svg style="left:369px;top:83px" width="11" height="11" viewBox="0 0 11 11" stroke="#c4c4c4" stroke-width="1.2"><path d="M0 3 H11 M0 8 H11 M7 .8 V5.2 M3.6 5.8 V10.2"/></svg>
 <div class="kebab" style="left:393px;top:84px"></div>
 <div class="t" style="left:28px;top:107px;font-size:11px;color:#c4c4c4">center</div>
 <div class="t" style="left:-1px;top:138px;width:32px;text-align:center;font-size:11px;color:#c4c4c4;transform:rotate(-90deg)">middle</div>
 <svg style="left:27px;top:128px" width="35" height="35" viewBox="0 0 35 35" fill="none"><rect x=".5" y=".5" width="34" height="34" stroke="#8a8a8a"/><rect x="9.5" y="9.5" width="16" height="16" stroke="#9a9a9a"/><path d="M17.5 1 V34 M1 17.5 H34" stroke="#c04040" stroke-width="1"/><rect x="16" y="16" width="3" height="3" fill="#e6b422"/></svg>
 <div class="t u" style="left:161px;top:108px">Pos X</div><div class="t u" style="left:243px;top:108px">Pos Y</div><div class="t u" style="left:324px;top:108px">Pos Z</div>
 <div class="fld" style="left:160px;top:124px;width:80px"></div><div class="t u" style="left:163px;top:126px">0</div>
 <div class="fld" style="left:242px;top:124px;width:80px"></div><div class="t u" style="left:245px;top:126px">-397</div>
 <div class="fld" style="left:323px;top:124px;width:80px"></div><div class="t u" style="left:326px;top:126px">0</div>
 <div class="t u" style="left:161px;top:144px">Width</div><div class="t u" style="left:243px;top:144px">Height</div>
 <div class="fld" style="left:160px;top:160px;width:80px"></div><div class="t u" style="left:163px;top:162px">1000</div>
 <div class="fld" style="left:242px;top:160px;width:80px"></div><div class="t u" style="left:245px;top:162px">100</div>
 <div class="a" style="left:352px;top:159px;width:23px;height:18px;background:#585858;border-radius:2px 0 0 2px"></div><div class="a" style="left:376px;top:159px;width:26px;height:18px;background:#585858;border-radius:0 2px 2px 0"></div>
 <svg style="left:358px;top:163px" width="11" height="10" viewBox="0 0 11 10" fill="none" stroke="#a0a0a0" stroke-width="1" stroke-dasharray="2 1.5"><rect x=".5" y=".5" width="10" height="9"/></svg>
 <div class="t" style="left:384px;top:161px;font-size:11px;color:#a0a0a0">R</div>
 <div class="fold" style="left:7px;top:186px"></div><div class="t u" style="left:19px;top:183px">Anchors</div>
 <!-- right strip pieces visible next to VS Code -->
 <div class="fld" style="left:380px;top:269px;width:23px;height:17px"></div>
 <div class="fld" style="left:380px;top:289px;width:23px;height:17px"></div>
 <div class="a" style="left:0;top:316px;width:407px;height:21px;background:#3e3e3e;border-top:1px solid #1a1a1a;border-bottom:1px solid #303030"></div><div class="kebab" style="left:393px;top:322px"></div>
 <div class="a" style="left:0;top:368px;width:407px;height:21px;background:#3e3e3e;border-top:1px solid #1a1a1a;border-bottom:1px solid #303030"></div><div class="kebab" style="left:393px;top:374px"></div>
 <div class="a" style="left:380px;top:403px;width:23px;height:19px;background:#515151;border:1px solid #303030;border-radius:3px"></div>
 <div class="fld" style="left:380px;top:444px;width:23px;height:78px"></div>
 <div class="dd" style="left:380px;top:525px;width:23px;height:17px"></div><div class="tri" style="left:390px;top:532px"></div>
 <div class="dd" style="left:380px;top:544px;width:23px;height:19px"></div>
 <div class="fld" style="left:380px;top:567px;width:23px;height:18px"></div><svg style="left:390px;top:570px" width="11" height="11" viewBox="0 0 11 11" fill="none" stroke="#c4c4c4"><circle cx="5.5" cy="5.5" r="4.6"/><circle cx="5.5" cy="5.5" r="1.6" fill="#c4c4c4"/></svg>
 <div class="dd" style="left:380px;top:588px;width:23px;height:17px"></div><div class="tri" style="left:390px;top:595px"></div>
 <div class="dd" style="left:380px;top:606px;width:23px;height:18px"></div>
 <div class="dd" style="left:380px;top:676px;width:23px;height:18px"></div><svg style="left:389px;top:679px" width="12" height="12" viewBox="0 0 12 12" stroke="#c4c4c4" fill="#c4c4c4"><path d="M1 11 L1.6 8.6 L7 3.2 L8.8 5 L3.4 10.4Z" stroke="none"/><path d="M6.2 2.4 L9.6 5.8" stroke-width="1.6"/><path d="M8 4 L10.4 1.6" stroke-width="2.4"/></svg>
 <div class="fld" style="left:380px;top:744px;width:23px;height:14px;border-radius:3px 3px 0 0"></div>
 <div class="a" style="left:0;top:756px;width:419px;height:20px;background:#3c3c3c;border-top:1px solid #242424;border-bottom:1px solid #2a2a2a"></div>
 <div class="a" style="left:388px;top:764px;width:13px;height:1px;background:#6a6a6a"></div><div class="a" style="left:388px;top:767px;width:13px;height:1px;background:#6a6a6a"></div>
 <div class="kebab" style="left:408px;top:761px"></div>
 <div class="a" style="left:0;top:777px;width:419px;height:160px;background:linear-gradient(#3a3a3a,#323232)"></div>
</div>
<!-- ===== Project ===== -->
<div class="pan" style="left:0;top:693px;width:1498px;height:317px">
 <div class="tabbar"></div>
 <div class="tab" style="left:0;width:80px"></div>
 <svg style="left:7px;top:4px" width="13" height="11"><use href="#fclosed"/></svg>
 <div class="t u" style="left:23px;top:3px">Project</div>
 <svg style="left:89px;top:4px" width="13" height="11" viewBox="0 0 13 11" fill="none" stroke="#c4c4c4" stroke-width="1.2"><rect x="2.6" y="1.5" width="7.8" height="8"/><path d="M.6 0 V11 M12.4 0 V11 M.6 2.5 H2.6 M.6 5.5 H2.6 M.6 8.5 H2.6 M10.4 2.5 H12.4 M10.4 5.5 H12.4 M10.4 8.5 H12.4"/></svg>
 <div class="t u" style="left:105px;top:3px">Timeline</div>
 <svg style="left:179px;top:4px" width="12" height="12" viewBox="0 0 12 12"><circle cx="6" cy="6" r="6" fill="#c4c4c4"/><path d="M6 1.6 V6.4 H10" fill="none" stroke="#282828" stroke-width="1.5"/></svg>
 <div class="t u" style="left:195px;top:3px">Animation</div>
 <div class="a" style="left:0;top:19px;width:1498px;height:21px;background:#3c3c3c;border-bottom:1px solid #232323"></div>
 <svg style="left:7px;top:23px" width="12" height="12" viewBox="0 0 12 12" stroke="#d2d2d2" stroke-width="1.6"><path d="M6 0 V12 M0 6 H12"/></svg>
 <div class="tri" style="left:23px;top:27px;border-left-width:4px;border-right-width:4px"></div>
 <div class="fld" style="left:354px;top:21px;width:318px;height:16px;border-radius:4px"></div>
 <svg style="left:359px;top:25px" width="8" height="9" viewBox="0 0 8 9" fill="none" stroke="#c4c4c4" stroke-width="1.3"><circle cx="3" cy="3" r="2.2"/><path d="M4.6 4.8 L7.2 8"/></svg>
 <svg style="left:657px;top:23px" width="12" height="12" viewBox="0 0 12 12" fill="none" stroke="#b8b8b8" stroke-width="1"><path d="M3 3 H.5 V11.5 H9 V9"/><rect x="3" y=".5" width="8.5" height="8.5"/><path d="M5.5 6.5 L9 3 M6.4 3 H9 V5.6"/></svg>
 <div class="a" style="left:675px;top:20px;width:1px;height:19px;background:#2a2a2a"></div>
 <svg style="left:681px;top:23px" width="13" height="12" viewBox="0 0 13 12" fill="#c4c4c4"><circle cx="3.6" cy="8.4" r="3.4"/><rect x="1" y="0" width="5" height="4.4"/><path d="M9.6 2 L13 8.6 H6.4Z"/></svg>
 <div class="a" style="left:700px;top:20px;width:1px;height:19px;background:#2a2a2a"></div>
 <svg style="left:706px;top:24px" width="13" height="10" viewBox="0 0 13 10" fill="#c4c4c4"><path d="M0 5.5 L5 .5 H12 a1 1 0 0 1 1 1 V5 L8 10Z"/><circle cx="10.6" cy="2.8" r="1" fill="#3c3c3c"/></svg>
 <div class="a" style="left:726px;top:20px;width:1px;height:19px;background:#2a2a2a"></div>
 <!-- tree -->
 <div class="a" style="left:0;top:167px;width:195px;height:16px;background:#4d4d4d"></div>
 <div class="fold" style="left:4px;top:45px"></div><svg style="left:18px;top:42px" width="12" height="12" viewBox="0 0 12 12"><path d="M6 0 L7.6 4.1 L12 4.4 L8.6 7.2 L9.7 11.5 L6 9.1 L2.3 11.5 L3.4 7.2 L0 4.4 L4.4 4.1Z" fill="#c2c2c2"/></svg><div class="t u" style="left:35px;top:40px;font-weight:bold;font-size:12.3px;">Favorites</div>
 <svg style="left:31.5px;top:58px" width="13" height="13"><use href="#mag"/></svg><div class="t u" style="left:48px;top:56px;">All Materials</div>
 <svg style="left:31.5px;top:74px" width="13" height="13"><use href="#mag"/></svg><div class="t u" style="left:48px;top:72px;">All Models</div>
 <svg style="left:31.5px;top:90px" width="13" height="13"><use href="#mag"/></svg><div class="t u" style="left:48px;top:88px;">All Prefabs</div>
 <div class="fold" style="left:4px;top:124px"></div><svg style="left:17px;top:121px" width="15" height="12"><use href="#fopen"/></svg><div class="t u" style="left:35px;top:119px;font-weight:bold;font-size:12.3px;">Assets</div>
 <div class="fold" style="left:18px;top:140px"></div><svg style="left:31.5px;top:137px" width="15" height="12"><use href="#fopen"/></svg><div class="t u" style="left:48px;top:135px;">MJT</div>
 <svg style="left:46px;top:153px" width="14" height="12"><use href="#fclosed"/></svg><div class="t u" style="left:62px;top:151px;">Scenes</div>
 <svg style="left:46px;top:169px" width="14" height="12"><use href="#fclosed"/></svg><div class="t u" style="left:62px;top:167px;">Scripts</div>
 <div class="fold" style="left:32px;top:188px"></div><svg style="left:45.5px;top:185px" width="15" height="12"><use href="#fopen"/></svg><div class="t u" style="left:62px;top:183px;">UI</div>
 <svg style="left:60px;top:201px" width="14" height="12"><use href="#fclosed"/></svg><div class="t u" style="left:76px;top:199px;">Audio</div>
 <svg style="left:60px;top:217px" width="14" height="12"><use href="#fclosed"/></svg><div class="t u" style="left:76px;top:215px;">Scripts</div>
 <svg style="left:60px;top:233px" width="14" height="12"><use href="#fclosed"/></svg><div class="t u" style="left:76px;top:231px;">Sprites</div>
 <div class="trir" style="left:20px;top:250.5px"></div><svg style="left:32px;top:249px" width="14" height="12"><use href="#fclosed"/></svg><div class="t u" style="left:48px;top:247px;">Plugins</div>
 <svg style="left:32px;top:265px" width="14" height="12"><use href="#fclosed"/></svg><div class="t u" style="left:48px;top:263px;">Resources</div>
 <svg style="left:32px;top:281px" width="14" height="12"><use href="#fclosed"/></svg><div class="t u" style="left:48px;top:279px;">Scenes</div>
 <svg style="left:32px;top:297px" width="14" height="12"><use href="#fclosed"/></svg><div class="t u" style="left:48px;top:295px;">Settings</div>
 <div class="trir" style="left:20px;top:314.5px"></div><svg style="left:32px;top:313px" width="14" height="12"><use href="#fclosed"/></svg><div class="t u" style="left:48px;top:311px;">TextMesh Pro</div>
 <div class="a" style="left:195px;top:40px;width:13px;height:277px;background:#353535"></div>
 <div class="tri" style="left:197px;top:46px;border-top:none;border-bottom:5px solid #b0b0b0"></div>
 <div class="a" style="left:197px;top:57px;width:9px;height:212px;background:#5f5f5f;border-radius:4.5px"></div>
 <div class="tri" style="left:197px;top:307px;border-top-color:#b0b0b0"></div>
 <div class="a" style="left:208px;top:40px;width:1px;height:277px;background:#232323"></div>
 <!-- right pane -->
 <div class="a" style="left:209px;top:40px;width:1289px;height:22px;background:#3f3f3f;border-bottom:1px solid #303030"></div>
 <div class="a" style="left:209px;top:62px;width:1289px;height:234px;background:#333"></div>
 <div class="a" style="left:209px;top:296px;width:1289px;height:21px;background:#3c3c3c"></div>
 <div class="t u" style="left:212px;top:42px">Assets</div><div class="chev r" style="left:254px;top:47px;border-color:#9a9a9a"></div>
 <div class="t u" style="left:267px;top:42px">MJT</div><div class="chev r" style="left:298px;top:47px;border-color:#9a9a9a"></div>
 <div class="t u" style="left:311px;top:42px;font-weight:bold;font-size:12.3px">Scripts</div>
 <svg style="left:235px;top:77px" width="72" height="84"><use href="#script"/></svg>
 <svg style="left:343px;top:77px" width="72" height="84"><use href="#script"/></svg>
 <svg style="left:451px;top:77px" width="72" height="84"><use href="#script"/></svg>
 <svg style="left:559px;top:77px" width="72" height="84"><use href="#script"/></svg>
 <div class="t" style="left:221px;top:167px;width:100px;text-align:center;font-size:10.8px;color:#c4c4c4">Clicker</div>
 <div class="t" style="left:329px;top:167px;width:100px;text-align:center;font-size:10.8px;color:#c4c4c4">Doors</div>
 <div class="t" style="left:437px;top:167px;width:100px;text-align:center;font-size:10.8px;color:#c4c4c4">Elevator</div>
 <div class="t" style="left:545px;top:167px;width:100px;text-align:center;font-size:10.8px;color:#c4c4c4">MonPremierScript</div>
</div>
<!-- ===== VS Code ===== -->
<div class="vs">
 <div class="a" style="left:0;top:0;width:1156px;height:34px;background:#3c3c3c"></div>
 <svg style="left:9px;top:9px" width="16" height="16" viewBox="0 0 16 16"><path d="M11.6 .4 L15.6 2.2 V13.8 L11.6 15.6 L4.6 9.4 L1.6 11.7 L.4 11.1 V4.9 L1.6 4.3 L4.6 6.6 Z M11.6 4.6 L7.4 8 L11.6 11.4 Z M1.8 6.2 V9.8 L3.6 8Z" fill="#2e9ef0" fill-rule="evenodd"/></svg>
 <div class="vt" style="left:42.3px;top:6px">File</div>
 <div class="vt" style="left:77.5px;top:6px">Edit</div>
 <div class="vt" style="left:115.3px;top:6px">Selection</div>
 <div class="vt" style="left:183.3px;top:6px">View</div>
 <div class="vt" style="left:226.5px;top:6px">Go</div>
 <div class="a" style="left:264px;top:16.5px;width:2px;height:2px;background:#ccc;box-shadow:5px 0 0 #ccc,10px 0 0 #ccc"></div>
 <svg style="left:333px;top:11px" width="40" height="12" viewBox="0 0 40 12" fill="none" stroke-width="1.1"><path d="M6 .8 L.8 6 L6 11.2 M.8 6 H12.5" stroke="#ccc"/><path d="M33 .8 L38.2 6 L33 11.2 M38.2 6 H26.5" stroke="#7a7a7a"/></svg>
 <div class="a" style="left:386px;top:5px;width:442px;height:24px;background:#474747;border:1px solid #5d5d5d;border-radius:6px"></div>
 <svg style="left:547px;top:11px" width="13" height="13" viewBox="0 0 13 13" fill="none" stroke="#ccc" stroke-width="1.1"><circle cx="8" cy="5" r="4"/><path d="M5.2 7.8 L.8 12.2"/></svg>
 <div class="vt" style="left:566px;top:6px;font-size:11.5px">Decouverte_CSharp</div>
 <svg style="left:920px;top:10px" width="96" height="14" viewBox="0 0 96 14" fill="none" stroke="#ccc" stroke-width="1.1"><rect x=".6" y=".6" width="14" height="12.8" rx="1"/><rect x=".6" y=".6" width="6" height="12.8" fill="#ccc"/><rect x="26.6" y=".6" width="14" height="12.8" rx="1"/><path d="M26.6 8.5 H40.6"/><rect x="52.6" y=".6" width="14" height="12.8" rx="1"/><path d="M59.6 .6 V13.4"/><rect x="79.6" y=".6" width="5.5" height="12.8" rx="1"/><rect x="89" y=".6" width="5" height="5" rx="1"/><rect x="89" y="8.4" width="5" height="5" rx="1"/></svg>
 <svg style="left:1036px;top:10px" width="104" height="12" viewBox="0 0 104 12" fill="none" stroke="#ccc" stroke-width="1"><path d="M0 6.5 H10.5"/><rect x="46.5" y="1" width="9.5" height="9.5"/><path d="M92 1 L102.5 11.5 M102.5 1 L92 11.5"/></svg>
 <div class="a" style="left:0;top:34px;width:47px;height:680px;background:#333"></div>
 <div class="a" style="left:0;top:34px;width:2px;height:48px;background:#fff"></div>
 <svg style="left:10.5px;top:45px" width="24" height="26" viewBox="0 0 24 26" fill="none" stroke="#fff" stroke-width="1.6" stroke-linejoin="round"><path d="M8 2 H17 L22.5 7.5 V19 H8 Z M16.5 2 V8 H22.5"/><path d="M8 7 H2 V24.5 H15.5 V19"/></svg>
 <svg style="left:9.5px;top:92px" width="27" height="27" viewBox="0 0 24 24" fill="none" stroke="#858585" stroke-width="1.6"><circle cx="14.5" cy="9.5" r="6.6"/><path d="M9.8 14.2 L2 22"/></svg>
 <svg style="left:10.5px;top:142px" width="24" height="24" viewBox="0 0 24 24" fill="none" stroke="#858585" stroke-width="1.6"><circle cx="6" cy="4" r="2.6"/><circle cx="6" cy="20" r="2.6"/><circle cx="18" cy="8.5" r="2.6"/><path d="M6 6.6 V17.4 M18 11.1 C18 15 6 13 6 17.4"/></svg>
 <svg style="left:10px;top:189px" width="26" height="26" viewBox="0 0 26 26" fill="none" stroke="#858585" stroke-width="1.6" stroke-linejoin="round"><path d="M9 9 V3 L24 12.5 L13.5 19"/><ellipse cx="7" cy="19.5" rx="3.4" ry="4.2"/><path d="M4.4 16 L2.4 14 M9.6 16 L11.6 14 M3.6 19.5 H.8 M10.4 19.5 H13.2 M4.4 23 L2.4 25 M9.6 23 L11.6 25 M3.6 18 H10.4" stroke-width="1.2"/></svg>
 <svg style="left:10.5px;top:238px" width="24" height="24" viewBox="0 0 24 24" fill="none" stroke="#858585" stroke-width="1.6"><path d="M2 8 H16.5 V22.5 H2 Z M9.2 8 V22.5 M2 15.2 H16.5"/><rect x="15.5" y="1.5" width="7" height="7"/></svg>
 <svg style="left:11.5px;top:286px" width="22" height="24" viewBox="0 0 22 24" fill="none" stroke="#858585" stroke-width="1.6" stroke-linejoin="round"><path d="M6 1.5 H16 M8 1.5 V9 L1.6 21 a1 1 0 0 0 1 1.5 H19.4 a1 1 0 0 0 1 -1.5 L14 9 V1.5 M4.6 15.5 H17.4"/></svg>
 <div class="badge" style="left:22px;top:58px">1</div>
 <div class="badge" style="left:22px;top:250px">1</div>
 <svg style="left:11px;top:629px" width="26" height="26" viewBox="0 0 26 26" fill="none" stroke="#858585" stroke-width="1.6"><circle cx="13" cy="13" r="11.6"/><circle cx="13" cy="10" r="4.2"/><path d="M5 21.4 C6.5 16.5 10 16 13 16 S19.5 16.5 21 21.4"/></svg>
 <svg style="left:11px;top:677px" width="26" height="26" viewBox="0 0 26 26" fill="none" stroke="#858585" stroke-width="1.6" stroke-linejoin="round"><circle cx="13" cy="13" r="3.2"/><path d="M11 1.5 H15 L15.7 5 L18 6.2 L21.2 4.4 L24 7.6 L21.8 10.2 L22.4 12.4 L25.4 13.6 L24.8 17.6 L21.4 17.8 L20 19.8 L21.2 23 L17.6 24.8 L15.4 22.2 H13 L10.6 22.2 L8.4 24.8 L4.8 23 L6 19.8 L4.6 17.8 L1.2 17.6 L.6 13.6 L3.6 12.4 L4.2 10.2 L2 7.6 L4.8 4.4 L8 6.2 L10.3 5 Z"/></svg>
 <div class="badge" style="left:22px;top:642px">1</div>
 <div class="badge" style="left:22px;top:690px">1</div>
 <div class="a" style="left:47px;top:34px;width:242px;height:680px;background:#252526"></div>
 <div class="vt" style="left:67px;top:40px;font-size:10.6px;letter-spacing:-.55px;color:#bbb">EXPLORER</div>
 <div class="a" style="left:259px;top:51.5px;width:2px;height:2px;background:#ccc;box-shadow:5px 0 0 #ccc,10px 0 0 #ccc"></div>
 <div class="chev d" style="left:55px;top:74.5px;width:7.5px;height:7.5px"></div>
 <div class="vt" style="left:67px;top:68px;font-size:11px;font-weight:bold;letter-spacing:-.68px;color:#ccc">DECOUVERTE_CSHARP</div>
 <div class="a" style="left:47px;top:201px;width:242px;height:22px;background:#37373d"></div>
 <div class="a" style="left:83px;top:201px;width:1px;height:88px;background:#585858"></div>
 <div class="chev r" style="left:65.0px;top:99px"></div>
 <div class="vt" style="left:81.0px;top:91px;color:#ccc">.vscode</div>
 <div class="chev d" style="left:65.5px;top:118.5px;width:7px;height:7px"></div>
 <div class="vt" style="left:81.0px;top:113px;color:#f48771">Assets</div>
 <div class="a" style="left:264px;top:120px;width:8px;height:8px;border-radius:4px;background:#8e4c45"></div>
 <div class="chev d" style="left:73.5px;top:140.5px;width:7px;height:7px"></div>
 <div class="vt" style="left:89.0px;top:135px;color:#f48771">MJT</div>
 <div class="a" style="left:264px;top:142px;width:8px;height:8px;border-radius:4px;background:#8e4c45"></div>
 <div class="chev r" style="left:81.0px;top:165px"></div>
 <div class="vt" style="left:97.0px;top:157px;color:#ccc">Scenes</div>
 <div class="chev d" style="left:81.5px;top:184.5px;width:7px;height:7px"></div>
 <div class="vt" style="left:97.0px;top:179px;color:#f48771">Scripts</div>
 <div class="a" style="left:264px;top:186px;width:8px;height:8px;border-radius:4px;background:#8e4c45"></div>
 <svg style="left:87px;top:206px" width="13" height="12"><use href="#cs"/></svg>
 <div class="vt" style="left:105.0px;top:201px;color:#ccc">Clicker.cs</div>
 <svg style="left:87px;top:228px" width="13" height="12"><use href="#cs"/></svg>
 <div class="vt" style="left:105.0px;top:223px;color:#ccc">Doors.cs</div>
 <svg style="left:87px;top:250px" width="13" height="12"><use href="#cs"/></svg>
 <div class="vt" style="left:105.0px;top:245px;color:#f48771">Elevator.cs</div>
 <div class="vt" style="left:266px;top:245px;color:#c5695a;font-size:12px">2</div>
 <svg style="left:87px;top:272px" width="13" height="12"><use href="#cs"/></svg>
 <div class="vt" style="left:105.0px;top:267px;color:#ccc">MonPremierScript.cs</div>
 <div class="chev r" style="left:81.0px;top:297px"></div>
 <div class="vt" style="left:97.0px;top:289px;color:#ccc">UI</div>
 <div class="chev r" style="left:73.0px;top:319px"></div>
 <div class="vt" style="left:89.0px;top:311px;color:#ccc">Plugins</div>
 <div class="chev r" style="left:73.0px;top:341px"></div>
 <div class="vt" style="left:89.0px;top:333px;color:#ccc">Resources</div>
 <div class="chev r" style="left:73.0px;top:363px"></div>
 <div class="vt" style="left:89.0px;top:355px;color:#ccc">Scenes</div>
 <div class="chev r" style="left:73.0px;top:385px"></div>
 <div class="vt" style="left:89.0px;top:377px;color:#ccc">Settings</div>
 <div class="chev r" style="left:73.0px;top:407px"></div>
 <div class="vt" style="left:89.0px;top:399px;color:#ccc">TextMesh Pro</div>
 <div class="chev r" style="left:73.0px;top:429px"></div>
 <div class="vt" style="left:89.0px;top:421px;color:#ccc">TutorialInfo</div>
 <div class="chev r" style="left:65.0px;top:451px"></div>
 <div class="vt" style="left:81.0px;top:443px;color:#ccc">Logs</div>
 <div class="chev r" style="left:65.0px;top:473px"></div>
 <div class="vt" style="left:81.0px;top:465px;color:#ccc">Packages</div>
 <div class="chev r" style="left:65.0px;top:495px"></div>
 <div class="vt" style="left:81.0px;top:487px;color:#ccc">UserSettings</div>
 <svg style="left:64px;top:515px" width="10" height="10"><use href="#rss"/></svg>
 <div class="vt" style="left:81.0px;top:509px;color:#ccc">Assembly-CSharp-Editor.csproj</div>
 <svg style="left:64px;top:537px" width="10" height="10"><use href="#rss"/></svg>
 <div class="vt" style="left:81.0px;top:531px;color:#ccc">Assembly-CSharp-firstpass.csproj</div>
 <svg style="left:64px;top:559px" width="10" height="10"><use href="#rss"/></svg>
 <div class="vt" style="left:81.0px;top:553px;color:#ccc">Assembly-CSharp.csproj</div>
 <svg style="left:65px;top:581px" width="10" height="10" viewBox="0 0 10 10" stroke="#ccc" stroke-width="1.3"><path d="M0 1 H10 M0 3.8 H7 M0 6.4 H9 M0 9 H6"/></svg>
 <div class="vt" style="left:81.0px;top:575px;color:#ccc">Decouverte_CSharp.sln</div>
 <div class="a" style="left:47px;top:648px;width:242px;height:1px;background:#3f3f41"></div>
 <div class="chev r" style="left:54px;top:657px"></div>
 <div class="vt" style="left:67px;top:649px;font-size:11px;font-weight:bold;letter-spacing:-0.15px">OUTLINE</div>
 <div class="a" style="left:47px;top:670px;width:242px;height:1px;background:#3f3f41"></div>
 <div class="chev r" style="left:54px;top:679px"></div>
 <div class="vt" style="left:67px;top:671px;font-size:11px;font-weight:bold;letter-spacing:-0.15px">TIMELINE</div>
 <div class="a" style="left:47px;top:692px;width:242px;height:1px;background:#3f3f41"></div>
 <div class="chev r" style="left:54px;top:701px"></div>
 <div class="vt" style="left:67px;top:693px;font-size:11px;font-weight:bold;letter-spacing:-0.45px">SOLUTION EXPLORER</div>
 <div class="a" style="left:289px;top:34px;width:867px;height:680px;background:#1e1e1e"></div>
 <div class="a" style="left:289px;top:34px;width:867px;height:35px;background:#252526"></div>
 <div class="a" style="left:289px;top:34px;width:132px;height:35px;background:#2d2d2d"></div>
 <div class="a" style="left:422px;top:34px;width:119px;height:35px;background:#2d2d2d"></div>
 <div class="a" style="left:542px;top:34px;width:119px;height:35px;background:#1e1e1e"></div>
 <svg style="left:303px;top:46px" width="13" height="12"><use href="#cs"/></svg><div class="vt" style="left:321.5px;top:41px;color:#f48771">Elevator.cs</div><div class="vt" style="left:386.5px;top:41px;color:#f48771;font-size:12px">2</div><div class="a" style="left:402.5px;top:47.5px;width:9px;height:9px;border-radius:5px;background:#a8a8a8"></div>
 <svg style="left:436px;top:46px" width="13" height="12"><use href="#cs"/></svg><div class="vt" style="left:454px;top:41px;color:#9d9d9d">Doors.cs</div>
 <svg style="left:556px;top:46px" width="13" height="12"><use href="#cs"/></svg><div class="vt" style="left:574px;top:41px;color:#fff">Clicker.cs</div>
 <svg style="left:642px;top:47px" width="10" height="10" viewBox="0 0 10 10" stroke="#fff" stroke-width="1.3"><path d="M.8 .8 L9.2 9.2 M9.2 .8 L.8 9.2"/></svg>
 <svg style="left:1060px;top:41px" width="30" height="20" viewBox="0 0 30 20" fill="none" stroke="#ccc" stroke-width="1.2" stroke-linejoin="round"><path d="M6 8 V1.5 L17 9.5 L10.5 14"/><ellipse cx="4.8" cy="14.5" rx="2.5" ry="3.2"/><path d="M2.8 12 L1.2 10.5 M6.8 12 L8.4 10.5 M2.3 14.5 H.4 M7.3 14.5 H9.2 M2.8 17 L1.2 18.5 M6.8 17 L8.4 18.5" stroke-width=".9"/><path d="M22 8.5 L25.5 12 L29 8.5"/></svg>
 <svg style="left:1101px;top:44px" width="15" height="14" viewBox="0 0 15 14" fill="none" stroke="#ccc" stroke-width="1.2"><rect x=".6" y=".6" width="13.8" height="12.8" rx="1"/><path d="M7.5 .6 V13.4"/></svg>
 <div class="a" style="left:1128px;top:50.5px;width:2px;height:2px;background:#ccc;box-shadow:5px 0 0 #ccc,10px 0 0 #ccc"></div>
 <div class="vt" style="left:305.0px;top:69px;color:#a9a9a9">Assets</div>
 <div class="chev r" style="left:343.9px;top:77px;border-color:#a9a9a9"></div>
 <div class="vt" style="left:357.5px;top:69px;color:#a9a9a9">MJT</div>
 <div class="chev r" style="left:382.5px;top:77px;border-color:#a9a9a9"></div>
 <div class="vt" style="left:396.5px;top:69px;color:#a9a9a9">Scripts</div>
 <div class="chev r" style="left:437.5px;top:77px;border-color:#a9a9a9"></div>
 <svg style="left:455px;top:74px" width="13" height="12"><use href="#cs"/></svg>
 <div class="vt" style="left:472.5px;top:69px;color:#a9a9a9">Clicker.cs</div>
 <div class="chev r" style="left:527.5px;top:77px;border-color:#a9a9a9"></div>
 <svg style="left:542px;top:73px" width="14" height="14" viewBox="0 0 14 14" fill="none" stroke="#ee9d28" stroke-width="1.2"><path d="M3.8 1 L6.4 3.6 L3.8 6.2 L1.2 3.6Z M6.4 3.6 H9 M4 6 V10.6 H8.4"/><path d="M9.6 1.6 L12.8 3.6 L9.6 5.6Z M9.4 8.6 L12.8 10.6 L9.4 12.6Z"/></svg>
 <div class="vt" style="left:560.0px;top:69px;color:#a9a9a9">Clicker</div>
 <div class="chev r" style="left:600.5px;top:77px;border-color:#a9a9a9"></div>
 <svg style="left:615px;top:73px;color:#b180d7" width="14" height="15"><use href="#cube"/></svg>
 <div class="vt" style="left:633.0px;top:69px;color:#a9a9a9">ClickCounter</div>
 <div class="ln" style="top:91px">1</div>
 <div class="code" style="top:91px"><span class="k">using</span> <span class="ty">UnityEngine</span>;</div>
 <div class="ln" style="top:110px">2</div>
 <div class="code" style="top:110px"><span style="opacity:.62"><span class="k">using</span> <span class="ty">UnityEngine</span>.<span class="ty">UI</span>;</span></div>
 <div class="ln" style="top:129px">3</div>
 <div class="code" style="top:129px"><span class="k">using</span> <span class="ty">TMPro</span>;</div>
 <div class="ln" style="top:148px">4</div>
 <div class="cl" style="left:357.0px;top:167px">0 references</div>
 <div class="ln" style="top:183px">5</div>
 <div class="code" style="top:183px"><span class="k">public</span> <span class="k">class</span> <span class="ty">Clicker</span> : <span class="ty">MonoBehaviour</span></div>
 <div class="ln" style="top:202px">6</div>
 <div class="code" style="top:202px"><span class="b1">{</span></div>
 <div class="cl" style="left:387.8px;top:221px">5 references</div>
 <div class="ln" style="top:237px">7</div>
 <div class="code" style="top:237px">    <span class="k">int</span> <span class="v">score</span> = <span class="n">0</span>;</div>
 <div class="cl" style="left:387.8px;top:256px">1 reference</div>
 <div class="ln" style="top:272px">8</div>
 <div class="code" style="top:272px">    <span class="k">public</span> <span class="ty">TextMeshProUGUI</span> <span class="v">scoreText</span>;</div>
 <div class="cl" style="left:387.8px;top:291px">1 reference</div>
 <div class="ln" style="top:307px">9</div>
 <div class="code" style="top:307px">    <span class="k">public</span> <span class="ty">GameObject</span> <span class="v">winText</span>;</div>
 <div class="ln" style="top:326px">10</div>
 <div class="ln" style="top:345px">11</div>
 <div class="code" style="top:345px">    <span class="cm">// Fonction pour compter les click sur le bouton</span></div>
 <div class="cl" style="left:387.8px;top:364px">0 references</div>
 <div class="ln" style="top:380px">12</div>
 <div class="code" style="top:380px">    <span class="k">public</span> <span class="k">void</span> <span class="f">ClickCounter</span><span class="b2">(</span><span class="k">int</span> <span class="v">clickPoints</span> = <span class="n">1</span><span class="b2">)</span></div>
 <div class="ln" style="top:399px">13</div>
 <div class="code" style="top:399px">    <span class="b2">{</span></div>
 <div class="ln" style="top:418px">14</div>
 <div class="code" style="top:418px">        <span class="c">if</span> <span class="b3">(</span><span class="v">score</span> &lt; <span class="n">100</span><span class="b3">)</span></div>
 <div class="ln" style="top:437px">15</div>
 <div class="code" style="top:437px">        <span class="b3">{</span></div>
 <div class="ln" style="top:456px">16</div>
 <div class="code" style="top:456px">            <span class="v">score</span> = <span class="v">score</span> + <span class="v">clickPoints</span>;</div>
 <div class="ln" style="top:475px">17</div>
 <div class="code" style="top:475px">            <span class="cm">//Debug.Log(&quot;Le score est : &quot; + score + &quot; point(s)&quot;);</span></div>
 <div class="ln" style="top:494px">18</div>
 <div class="code" style="top:494px">            <span class="cm">// Ici je veux indiquer le score mis à jour dans le TextMeshPro &quot;Score : XX&quot;</span></div>
 <div class="ln" style="top:513px">19</div>
 <div class="code" style="top:513px">            <span class="v">scoreText</span>.<span class="v">text</span> = <span class="s">&quot;Score : &quot;</span> + <span class="v">score</span>;</div>
 <div class="ln" style="top:532px">20</div>
 <div class="code" style="top:532px">        <span class="b3">}</span></div>
 <div class="ln" style="top:551px">21</div>
 <div class="ln" style="top:570px">22</div>
 <div class="code" style="top:570px">        <span class="c">if</span><span class="b3">(</span><span class="v">score</span> &gt;= <span class="n">100</span><span class="b3">)</span></div>
 <div class="ln" style="top:589px">23</div>
 <div class="code" style="top:589px">        <span class="b3">{</span></div>
 <div class="ln" style="top:608px">24</div>
 <div class="code" style="top:608px">            <span class="cm">//Debug.Log(&quot;Félicitations !!!&quot;);</span></div>
 <div class="ln" style="top:627px;color:#c6c6c6">25</div>
 <div class="code" style="top:627px">            <span class="v">winText</span>.<span class="f">SetActive</span><span class="b1">(</span><span class="k">true</span><span class="b1">)</span>;</div>
 <div class="ln" style="top:646px">26</div>
 <div class="code" style="top:646px">        <span class="b3">}</span></div>
 <div class="ln" style="top:665px">27</div>
 <div class="code" style="top:665px">    <span class="b2">}</span></div>
 <div class="ln" style="top:684px">28</div>
 <div class="code" style="top:684px"><span class="b1">}</span></div>
 <div class="ig" style="left:357.0px;top:237px;height:19px;background:#404040"></div>
 <div class="ig" style="left:357.0px;top:272px;height:19px;background:#404040"></div>
 <div class="ig" style="left:357.0px;top:307px;height:57px;background:#404040"></div>
 <div class="ig" style="left:357.0px;top:380px;height:304px;background:#404040"></div>
 <div class="ig" style="left:387.8px;top:418px;height:247px;background:#404040"></div>
 <div class="ig" style="left:418.6px;top:456px;height:76px;background:#404040"></div>
 <div class="ig" style="left:418.6px;top:608px;height:38px;background:#707070"></div>
 <div class="a" style="left:357px;top:627px;width:688px;height:19px;border-top:2px solid #282828;border-bottom:2px solid #282828"></div>
 <div class="a" style="left:419.1px;top:590px;width:7.7px;height:18px;border:1px solid #888;background:rgba(0,100,0,.1)"></div>
 <div class="a" style="left:419.1px;top:647px;width:7.7px;height:18px;border:1px solid #888;background:rgba(0,100,0,.1)"></div>
 <div class="a" style="left:633.7px;top:628px;width:2px;height:18px;background:#d0d0d0"></div>
 <div class="a" style="left:495.6px;top:472px;width:9px;height:1px;border-top:1.5px dotted #aaa"></div>
 <svg style="left:360px;top:628px" width="11" height="15" viewBox="0 0 11 15"><path d="M5.5 .3 a5 5 0 0 1 3 9 V11 H2.5 V9.3 a5 5 0 0 1 3 -9Z" fill="#ffcc00"/><rect x="3" y="11.6" width="5" height="2.6" rx=".8" fill="#ffcc00"/><rect x="4.4" y="10.4" width="2.2" height="2" fill="#1e1e1e"/></svg>
 <div class="a" style="left:1039px;top:91px;width:6px;height:623px;background:linear-gradient(90deg,rgba(0,0,0,0),rgba(0,0,0,.35))"></div>
 <svg style="left:1053px;top:91px;opacity:.62" width="92" height="60" viewBox="0 0 92 60"><rect x="0.0" y="0" width="5.1" height="1.3" fill="#3e6d94"/><rect x="6.1" y="0" width="11.2" height="1.3" fill="#3a8c7c"/><rect x="0.0" y="2" width="5.1" height="1.3" fill="#3e6d94"/><rect x="6.1" y="2" width="14.3" height="1.3" fill="#3a8c7c"/><rect x="0.0" y="4" width="5.1" height="1.3" fill="#3e6d94"/><rect x="6.1" y="4" width="5.1" height="1.3" fill="#3a8c7c"/><rect x="0.0" y="8" width="6.1" height="1.3" fill="#3e6d94"/><rect x="7.1" y="8" width="5.1" height="1.3" fill="#3e6d94"/><rect x="13.3" y="8" width="7.1" height="1.3" fill="#3a8c7c"/><rect x="23.5" y="8" width="13.3" height="1.3" fill="#3a8c7c"/><rect x="0.0" y="10" width="1.0" height="1.3" fill="#8a8a8a"/><rect x="4.1" y="12" width="3.1" height="1.3" fill="#3e6d94"/><rect x="8.2" y="12" width="9.2" height="1.3" fill="#6d97ae"/><rect x="4.1" y="14" width="6.1" height="1.3" fill="#3e6d94"/><rect x="11.2" y="14" width="15.3" height="1.3" fill="#3a8c7c"/><rect x="27.5" y="14" width="10.2" height="1.3" fill="#6d97ae"/><rect x="4.1" y="16" width="6.1" height="1.3" fill="#3e6d94"/><rect x="11.2" y="16" width="10.2" height="1.3" fill="#3a8c7c"/><rect x="22.4" y="16" width="8.2" height="1.3" fill="#6d97ae"/><rect x="4.1" y="20" width="47.9" height="1.3" fill="#4b6b3f"/><rect x="4.1" y="22" width="6.1" height="1.3" fill="#3e6d94"/><rect x="11.2" y="22" width="4.1" height="1.3" fill="#3e6d94"/><rect x="16.3" y="22" width="12.2" height="1.3" fill="#9a9a78"/><rect x="29.6" y="22" width="3.1" height="1.3" fill="#3e6d94"/><rect x="33.7" y="22" width="16.3" height="1.3" fill="#6d97ae"/><rect x="4.1" y="24" width="1.0" height="1.3" fill="#8a8a8a"/><rect x="8.2" y="26" width="2.0" height="1.3" fill="#875f85"/><rect x="11.2" y="26" width="12.2" height="1.3" fill="#6d97ae"/><rect x="8.2" y="28" width="1.0" height="1.3" fill="#8a8a8a"/><rect x="12.2" y="30" width="5.1" height="1.3" fill="#6d97ae"/><rect x="20.4" y="30" width="5.1" height="1.3" fill="#6d97ae"/><rect x="28.6" y="30" width="12.2" height="1.3" fill="#6d97ae"/><rect x="12.2" y="32" width="57.1" height="1.3" fill="#4b6b3f"/><rect x="12.2" y="34" width="77.5" height="1.3" fill="#4b6b3f"/><rect x="12.2" y="36" width="14.3" height="1.3" fill="#6d97ae"/><rect x="29.6" y="36" width="10.2" height="1.3" fill="#8f6654"/><rect x="42.8" y="36" width="6.1" height="1.3" fill="#6d97ae"/><rect x="8.2" y="38" width="1.0" height="1.3" fill="#8a8a8a"/><rect x="8.2" y="42" width="2.0" height="1.3" fill="#875f85"/><rect x="11.2" y="42" width="13.3" height="1.3" fill="#6d97ae"/><rect x="8.2" y="44" width="1.0" height="1.3" fill="#8a8a8a"/><rect x="12.2" y="46" width="33.7" height="1.3" fill="#4b6b3f"/><rect x="12.2" y="48" width="7.1" height="1.3" fill="#6d97ae"/><rect x="20.4" y="48" width="9.2" height="1.3" fill="#9a9a78"/><rect x="30.6" y="48" width="6.1" height="1.3" fill="#3e6d94"/><rect x="8.2" y="50" width="1.0" height="1.3" fill="#8a8a8a"/><rect x="4.1" y="52" width="1.0" height="1.3" fill="#8a8a8a"/><rect x="0.0" y="54" width="1.0" height="1.3" fill="#8a8a8a"/></svg>
 <div class="a" style="left:1143px;top:91px;width:13px;height:623px;border-left:1px solid #3a3a3a;border-top:1px solid #3a3a3a"></div>
 <div class="a" style="left:1144px;top:364px;width:12px;height:2px;background:#c0c0c0"></div>
 <div class="a" style="left:0;top:714px;width:1156px;height:22px;background:#007acc"></div>
 <div class="a" style="left:0;top:714px;width:33px;height:22px;background:#16825d"></div>
 <svg style="left:10px;top:719px" width="13" height="12" viewBox="0 0 13 12" fill="none" stroke="#fff" stroke-width="1.3"><path d="M1 4.5 L5 8 L1 11.5 M12 .5 L8 4 L12 7.5"/></svg>
 <svg style="left:41.5px;top:719px" width="12" height="12" viewBox="0 0 12 12" fill="none" stroke="#fff" stroke-width="1.1"><circle cx="6" cy="6" r="5.3"/><path d="M3.8 3.8 L8.2 8.2 M8.2 3.8 L3.8 8.2"/></svg>
 <div class="vt" style="left:57.5px;top:714px;color:#fff;font-size:11.6px;letter-spacing:-.1px">2</div>
 <svg style="left:69px;top:719px" width="13" height="12" viewBox="0 0 13 12" fill="none" stroke="#fff" stroke-width="1.1" stroke-linejoin="round"><path d="M6.5 .8 L12.4 11.2 H.6Z M6.5 4.4 V8"/><circle cx="6.5" cy="9.5" r=".4"/></svg>
 <div class="vt" style="left:85.5px;top:714px;color:#fff;font-size:11.6px;letter-spacing:-.1px">0</div>
 <svg style="left:109px;top:718px" width="13" height="13" viewBox="0 0 13 13" fill="none" stroke="#fff" stroke-width="1.1"><path d="M6.5 5.5 L3.6 12.5 M6.5 5.5 L9.4 12.5 M4.6 10 H8.4"/><circle cx="6.5" cy="4.2" r="1.2"/><path d="M3.8 1.4 a4 4 0 0 0 0 5.6 M9.2 1.4 a4 4 0 0 1 0 5.6 M1.8 0 a6.2 6.2 0 0 0 0 8.4 M11.2 0 a6.2 6.2 0 0 1 0 8.4" stroke-width=".9"/></svg>
 <div class="vt" style="left:125.5px;top:714px;color:#fff;font-size:11.6px;letter-spacing:-.1px">0</div>
 <div class="vt" style="left:147.5px;top:714px;color:#fff;font-size:11.6px;letter-spacing:-.1px">Projects: 3</div>
 <div class="vt" style="left:756.3px;top:714px;color:#fff;font-size:11.6px;letter-spacing:-.1px">Ln 25, Col 37</div>
 <div class="vt" style="left:840.5px;top:714px;color:#fff;font-size:11.6px;letter-spacing:-.1px">Spaces: 4</div>
 <div class="vt" style="left:905.4px;top:714px;color:#fff;font-size:11.6px;letter-spacing:-.1px">UTF-8</div>
 <div class="vt" style="left:953.0px;top:714px;color:#fff;font-size:11.6px;letter-spacing:-.1px">CRLF</div>
 <div class="vt" style="left:995.3px;top:714px;color:#fff;font-size:11.6px;letter-spacing:-.1px">C#</div>
 <div class="vt" style="left:1043.3px;top:714px;color:#fff;font-size:11.6px;letter-spacing:-.1px">Go Live</div>
 <svg style="left:1026px;top:718px" width="13" height="14" viewBox="0 0 13 14" fill="none" stroke="#fff" stroke-width="1.2"><circle cx="6.5" cy="5.6" r="1.6" fill="#fff"/><path d="M6.5 7 V13.5"/><path d="M3.6 8.6 a4.2 4.2 0 1 1 5.8 0 M2 10.6 a6.4 6.4 0 1 1 9 0" stroke-width="1"/></svg>
 <svg style="left:1098px;top:718px" width="14" height="14" viewBox="0 0 14 14" fill="none" stroke="#fff" stroke-width="1.2"><path d="M7 .8 L12.6 3.9 V10.1 L7 13.2 L1.4 10.1 V3.9Z"/><path d="M6.6 5.2 a2 2 0 1 0 0 3.6 M8.6 4.8 V8.4 M10.2 4.8 V8.4 M7.8 6 H11 M7.8 7.4 H11" stroke-width=".8"/></svg>
 <svg style="left:1129px;top:718px" width="13" height="14" viewBox="0 0 13 14" fill="none" stroke="#fff" stroke-width="1.2" stroke-linejoin="round"><path d="M6.5 1 a4 4 0 0 1 4 4 V8.5 L12 11 H1 L2.5 8.5 V5 a4 4 0 0 1 4 -4Z M5 11.4 a1.6 1.6 0 0 0 3 0"/></svg>
</div>
</body></html>
